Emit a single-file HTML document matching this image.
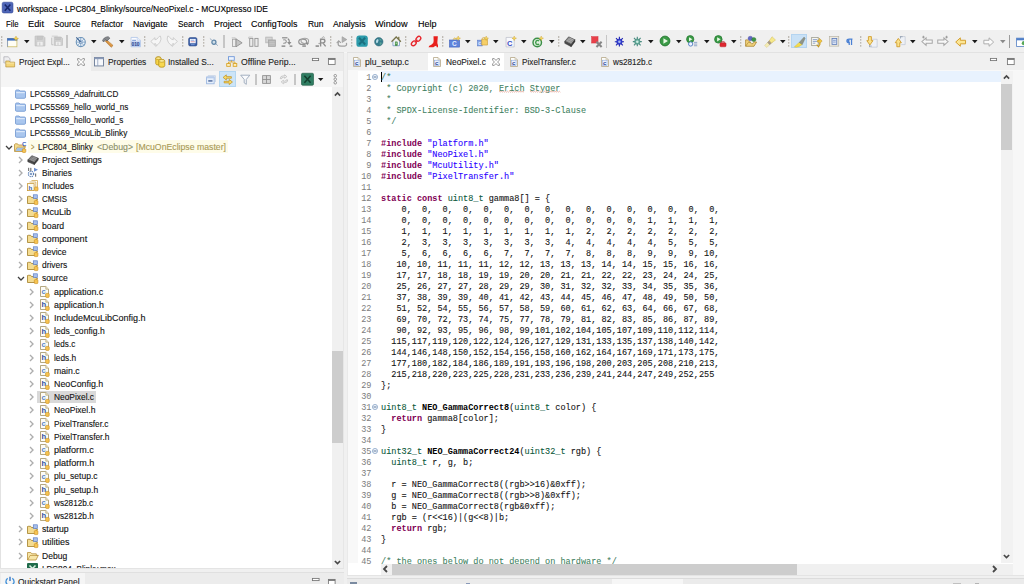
<!DOCTYPE html>
<html lang="en"><head><meta charset="utf-8"><title>workspace - LPC804_Blinky/source/NeoPixel.c - MCUXpresso IDE</title>
<style>

html,body{margin:0;padding:0;}
body{width:1024px;height:584px;overflow:hidden;background:#f0f0f0;font-family:"Liberation Sans",sans-serif;font-size:9.3px;}
#app{position:relative;width:1024px;height:584px;overflow:hidden;background:#f0f0f0;}
#app div,#app span.t,#app svg,#app pre{position:absolute;}
span.t{white-space:pre;transform-origin:0 50%;-webkit-text-stroke:0.12px;}
svg{overflow:visible;}
pre{margin:0;font-family:"Liberation Mono",monospace;font-size:9px;line-height:11px;transform-origin:0 0;white-space:pre;-webkit-text-stroke:0.1px;}
.k{color:#7f0055;font-weight:bold;-webkit-text-stroke:0;}
.c{color:#3f7f5f;-webkit-text-stroke:0.08px;}
.s{color:#2a00ff;}
.ty{color:#0e5a3c;}
.f{font-weight:bold;color:#000;-webkit-text-stroke:0;}


</style></head>
<body>
<div id="app">
<div style="left:0px;top:0px;width:1024px;height:30px;background:#ffffff;"></div>
<span class="t" style="left:17px;top:2.50px;line-height:12px;font-size:9.3px;color:#000;transform:scaleX(0.9114);">workspace - LPC804_Blinky/source/NeoPixel.c - MCUXpresso IDE</span>
<span class="t" style="left:6px;top:18.00px;line-height:12px;font-size:9.3px;color:#000;transform:scaleX(0.8342);">File</span>
<span class="t" style="left:28px;top:18.00px;line-height:12px;font-size:9.3px;color:#000;transform:scaleX(0.9981);">Edit</span>
<span class="t" style="left:53.5px;top:18.00px;line-height:12px;font-size:9.3px;color:#000;transform:scaleX(0.8993);">Source</span>
<span class="t" style="left:90.5px;top:18.00px;line-height:12px;font-size:9.3px;color:#000;transform:scaleX(0.9106);">Refactor</span>
<span class="t" style="left:133px;top:18.00px;line-height:12px;font-size:9.3px;color:#000;transform:scaleX(0.9400);">Navigate</span>
<span class="t" style="left:177.5px;top:18.00px;line-height:12px;font-size:9.3px;color:#000;transform:scaleX(0.8823);">Search</span>
<span class="t" style="left:213.5px;top:18.00px;line-height:12px;font-size:9.3px;color:#000;transform:scaleX(0.9503);">Project</span>
<span class="t" style="left:251px;top:18.00px;line-height:12px;font-size:9.3px;color:#000;transform:scaleX(0.9572);">ConfigTools</span>
<span class="t" style="left:307.5px;top:18.00px;line-height:12px;font-size:9.3px;color:#000;transform:scaleX(0.9084);">Run</span>
<span class="t" style="left:333px;top:18.00px;line-height:12px;font-size:9.3px;color:#000;transform:scaleX(0.9386);">Analysis</span>
<span class="t" style="left:375px;top:18.00px;line-height:12px;font-size:9.3px;color:#000;transform:scaleX(0.9825);">Window</span>
<span class="t" style="left:417.5px;top:18.00px;line-height:12px;font-size:9.3px;color:#000;transform:scaleX(0.9673);">Help</span>
<div style="left:0px;top:30px;width:1024px;height:22px;background:#f0f0f0;"></div>
<div style="left:0px;top:52px;width:1024px;height:1px;background:#f6f6f6;"></div>
<svg style="left:1.10px;top:36px" width="1.4" height="12" viewBox="0 0 14 120"><path d="M7 3 V120" stroke="#aaa59c" stroke-width="13" stroke-dasharray="13 17" fill="none"/></svg>
<svg style="left:144.30px;top:36px" width="1.4" height="12" viewBox="0 0 14 120"><path d="M7 3 V120" stroke="#aaa59c" stroke-width="13" stroke-dasharray="13 17" fill="none"/></svg>
<svg style="left:182.00px;top:36px" width="1.4" height="12" viewBox="0 0 14 120"><path d="M7 3 V120" stroke="#aaa59c" stroke-width="13" stroke-dasharray="13 17" fill="none"/></svg>
<svg style="left:202.70px;top:36px" width="1.4" height="12" viewBox="0 0 14 120"><path d="M7 3 V120" stroke="#aaa59c" stroke-width="13" stroke-dasharray="13 17" fill="none"/></svg>
<svg style="left:330.10px;top:36px" width="1.4" height="12" viewBox="0 0 14 120"><path d="M7 3 V120" stroke="#aaa59c" stroke-width="13" stroke-dasharray="13 17" fill="none"/></svg>
<svg style="left:350.70px;top:36px" width="1.4" height="12" viewBox="0 0 14 120"><path d="M7 3 V120" stroke="#aaa59c" stroke-width="13" stroke-dasharray="13 17" fill="none"/></svg>
<svg style="left:405.30px;top:36px" width="1.4" height="12" viewBox="0 0 14 120"><path d="M7 3 V120" stroke="#aaa59c" stroke-width="13" stroke-dasharray="13 17" fill="none"/></svg>
<svg style="left:442.10px;top:36px" width="1.4" height="12" viewBox="0 0 14 120"><path d="M7 3 V120" stroke="#aaa59c" stroke-width="13" stroke-dasharray="13 17" fill="none"/></svg>
<svg style="left:557.60px;top:36px" width="1.4" height="12" viewBox="0 0 14 120"><path d="M7 3 V120" stroke="#aaa59c" stroke-width="13" stroke-dasharray="13 17" fill="none"/></svg>
<svg style="left:739.90px;top:36px" width="1.4" height="12" viewBox="0 0 14 120"><path d="M7 3 V120" stroke="#aaa59c" stroke-width="13" stroke-dasharray="13 17" fill="none"/></svg>
<svg style="left:787.70px;top:36px" width="1.4" height="12" viewBox="0 0 14 120"><path d="M7 3 V120" stroke="#aaa59c" stroke-width="13" stroke-dasharray="13 17" fill="none"/></svg>
<svg style="left:859.80px;top:36px" width="1.4" height="12" viewBox="0 0 14 120"><path d="M7 3 V120" stroke="#aaa59c" stroke-width="13" stroke-dasharray="13 17" fill="none"/></svg>
<div style="left:66.3px;top:35.2px;width:1.6px;height:12.8px;background:#c6c6c6;"></div>
<div style="left:223.2px;top:35.2px;width:1.6px;height:12.8px;background:#c6c6c6;"></div>
<div style="left:605.9000000000001px;top:35.2px;width:1.6px;height:12.8px;background:#c6c6c6;"></div>
<div style="left:1009.2px;top:34.8px;width:1px;height:13.2px;background:#9c9c9c;"></div>
<svg style="left:23.7px;top:39.90px" width="5.6" height="3.2" viewBox="0 0 56 32"><path d="M0 0 L56 0 L28 32 Z" fill="#1a1a1a"/></svg>
<svg style="left:90.5px;top:39.90px" width="5.6" height="3.2" viewBox="0 0 56 32"><path d="M0 0 L56 0 L28 32 Z" fill="#1a1a1a"/></svg>
<svg style="left:118.6px;top:39.90px" width="5.6" height="3.2" viewBox="0 0 56 32"><path d="M0 0 L56 0 L28 32 Z" fill="#1a1a1a"/></svg>
<svg style="left:464.8px;top:39.90px" width="5.6" height="3.2" viewBox="0 0 56 32"><path d="M0 0 L56 0 L28 32 Z" fill="#1a1a1a"/></svg>
<svg style="left:492.5px;top:39.90px" width="5.6" height="3.2" viewBox="0 0 56 32"><path d="M0 0 L56 0 L28 32 Z" fill="#1a1a1a"/></svg>
<svg style="left:520.9px;top:39.90px" width="5.6" height="3.2" viewBox="0 0 56 32"><path d="M0 0 L56 0 L28 32 Z" fill="#1a1a1a"/></svg>
<svg style="left:548.7px;top:39.90px" width="5.6" height="3.2" viewBox="0 0 56 32"><path d="M0 0 L56 0 L28 32 Z" fill="#1a1a1a"/></svg>
<svg style="left:580.3px;top:39.90px" width="5.6" height="3.2" viewBox="0 0 56 32"><path d="M0 0 L56 0 L28 32 Z" fill="#1a1a1a"/></svg>
<svg style="left:647.6px;top:39.90px" width="5.6" height="3.2" viewBox="0 0 56 32"><path d="M0 0 L56 0 L28 32 Z" fill="#1a1a1a"/></svg>
<svg style="left:675.6px;top:39.90px" width="5.6" height="3.2" viewBox="0 0 56 32"><path d="M0 0 L56 0 L28 32 Z" fill="#1a1a1a"/></svg>
<svg style="left:703.7px;top:39.90px" width="5.6" height="3.2" viewBox="0 0 56 32"><path d="M0 0 L56 0 L28 32 Z" fill="#1a1a1a"/></svg>
<svg style="left:731px;top:39.90px" width="5.6" height="3.2" viewBox="0 0 56 32"><path d="M0 0 L56 0 L28 32 Z" fill="#1a1a1a"/></svg>
<svg style="left:779.6px;top:39.90px" width="5.6" height="3.2" viewBox="0 0 56 32"><path d="M0 0 L56 0 L28 32 Z" fill="#1a1a1a"/></svg>
<svg style="left:882.3px;top:39.90px" width="5.6" height="3.2" viewBox="0 0 56 32"><path d="M0 0 L56 0 L28 32 Z" fill="#1a1a1a"/></svg>
<svg style="left:910.3px;top:39.90px" width="5.6" height="3.2" viewBox="0 0 56 32"><path d="M0 0 L56 0 L28 32 Z" fill="#1a1a1a"/></svg>
<svg style="left:971.5px;top:39.90px" width="5.6" height="3.2" viewBox="0 0 56 32"><path d="M0 0 L56 0 L28 32 Z" fill="#1a1a1a"/></svg>
<svg style="left:999.5px;top:39.90px" width="5.6" height="3.2" viewBox="0 0 56 32"><path d="M0 0 L56 0 L28 32 Z" fill="#8a8a8a"/></svg>
<svg style="left:7px;top:35.55px" width="11.5" height="11.5" viewBox="0 0 16 16"><rect x="0.8" y="3.6" width="13" height="11.4" fill="#fffef4" stroke="#cdbb66" stroke-width="1.1"/><path d="M0.8 15 V3.6" stroke="#7f98c8" stroke-width="1.1"/><rect x="0.3" y="3" width="14" height="3.4" fill="#3f6fc0"/><path d="M12.5 0 L13.6 2.6 L16 3.4 L13.6 4.4 L12.5 7 L11.4 4.4 L9 3.4 L11.4 2.6 Z" fill="#f5d55a" stroke="#c89a20" stroke-width="0.5"/></svg>
<svg style="left:34.2px;top:35.30px" width="12" height="12" viewBox="0 0 16 16"><path d="M1.5 1.5 H12.5 L14.5 3.5 V14.5 H1.5 Z" fill="#d2d2d2" stroke="#bcbcbc" stroke-width="1"/><rect x="4" y="1.5" width="7.5" height="4.5" fill="#c6c6c6" stroke="#bcbcbc" stroke-width="0.6"/><rect x="4" y="8.5" width="8" height="6" fill="#eeeeee" stroke="#c4c4c4" stroke-width="0.6"/><rect x="6.5" y="10" width="2" height="4.5" fill="#d2d2d2"/></svg>
<svg style="left:51px;top:35.30px" width="12" height="12" viewBox="0 0 16 16"><path d="M1 3.5 V13 H3" fill="none" stroke="#bcbcbc" stroke-width="1.2"/><g transform="translate(3,1.5) scale(0.85)"><path d="M1.5 1.5 H12.5 L14.5 3.5 V14.5 H1.5 Z" fill="#d2d2d2" stroke="#bcbcbc" stroke-width="1"/><rect x="4" y="1.5" width="7.5" height="4.5" fill="#c6c6c6" stroke="#bcbcbc" stroke-width="0.6"/><rect x="4" y="8.5" width="8" height="6" fill="#eeeeee" stroke="#c4c4c4" stroke-width="0.6"/><rect x="6.5" y="10" width="2" height="4.5" fill="#d2d2d2"/></g><path d="M1 1.5 H9" stroke="#c4c4c4" stroke-width="1"/></svg>
<svg style="left:75.2px;top:35.55px" width="11.5" height="11.5" viewBox="0 0 16 16"><circle cx="8" cy="8.5" r="6.3" fill="#eef4fb" stroke="#6a92b8" stroke-width="1.5"/><path d="M8 2.5 V14.5 M2 8.5 H14 M3.8 4.3 L12.2 12.7 M12.2 4.3 L3.8 12.7" stroke="#7aa0c4" stroke-width="1.2"/><circle cx="8" cy="8.5" r="1.8" fill="#f4f8fd" stroke="#4a75a8" stroke-width="0.9"/><path d="M1.8 1.8 L8 8.5" stroke="#3f6494" stroke-width="1.6"/></svg>
<svg style="left:102px;top:35.55px" width="11.5" height="11.5" viewBox="0 0 16 16"><path d="M6.2 5 L15.4 13.2 L12.8 15.8 L4.6 7.4 Z" fill="#d68f3c" stroke="#a46a24" stroke-width="0.7"/><path d="M7.5 6.8 L13.8 13" stroke="#ecb870" stroke-width="0.9"/><path d="M0.8 7 Q1.8 1.6 8.6 0.9 L11 3 L7 7 L5.2 5.4 Q3.6 5.6 2.8 8 Z" fill="#85888c" stroke="#4c4f55" stroke-width="0.8"/></svg>
<svg style="left:130px;top:35.55px" width="11.5" height="11.5" viewBox="0 0 16 16"><path d="M1.5 2 H10 L14.5 6 V15 H1.5 Z" fill="#fbfcff" stroke="#a9c0e6" stroke-width="1"/><path d="M10 2 V6 H14.5" fill="#eef3fc" stroke="#a9c0e6" stroke-width="0.8"/><rect x="1.5" y="7.4" width="13" height="7.6" fill="#b4c8ee"/><path d="M3 6 H8.5" stroke="#5f86cc" stroke-width="1.2"/><text x="2" y="14" font-family="Liberation Sans, sans-serif" font-size="6.8" font-weight="bold" fill="#2a468a">010</text></svg>
<svg style="left:150px;top:35.20px" width="12.2" height="12.2" viewBox="0 0 16 16"><path d="M1 8.5 L6.5 3.5 V6.3 Q9.5 6 11 3.2 Q12 1.2 13.8 1.5 Q15.5 5.5 13 9.5 Q11 12.5 7.5 15 Q9 12.2 6.5 10.8 V13.5 Z" fill="#f6f6f6" stroke="#c4c4c4" stroke-width="1"/></svg>
<svg style="left:165.6px;top:35.20px" width="12.2" height="12.2" viewBox="0 0 16 16"><path d="M15 8.5 L9.5 3.5 V6.3 Q6.5 6 5 3.2 Q4 1.2 2.2 1.5 Q0.5 5.5 3 9.5 Q5 12.5 8.5 15 Q7 12.2 9.5 10.8 V13.5 Z" fill="#f6f6f6" stroke="#c4c4c4" stroke-width="1"/></svg>
<svg style="left:188.4px;top:36.50px" width="9.6" height="9.6" viewBox="0 0 16 16"><rect x="1" y="1" width="14" height="14" rx="2.6" fill="#3b5fa8" stroke="#2a4684" stroke-width="0.9"/><rect x="3.2" y="3.2" width="9.6" height="7.2" fill="#f4f8ff"/><path d="M4.5 5.4 H10.5" stroke="#5f86d0" stroke-width="1.1"/><path d="M4.5 7.9 H11.5" stroke="#c86a78" stroke-width="1"/><path d="M5 12.8 H11" stroke="#7fa4e0" stroke-width="1.4"/></svg>
<svg style="left:209.2px;top:36.50px" width="9.6" height="9.6" viewBox="0 0 16 16"><path d="M1.5 2.5 L14.8 14.5" stroke="#8aa0b8" stroke-width="1.4"/><circle cx="8.2" cy="8.8" r="3.4" fill="#cfdde8" stroke="#5f86a8" stroke-width="2.1"/></svg>
<svg style="left:230.6px;top:35.55px" width="11.5" height="11.5" viewBox="0 0 16 16"><path d="M1 2.5 H6 V4.5" fill="none" stroke="#b8b8b8" stroke-width="1"/><rect x="2" y="4.5" width="5" height="10" fill="#ececec" stroke="#a4a4a4" stroke-width="1.2"/><path d="M7 4 L15.5 9.5 L7 15 Z" fill="#c4c4c4" stroke="#8e8e8e" stroke-width="1.2"/></svg>
<svg style="left:248px;top:35.80px" width="11" height="11" viewBox="0 0 16 16"><path d="M1 4 V1.5 H7" fill="none" stroke="#b8b8b8" stroke-width="1"/><rect x="2.5" y="3.5" width="4.6" height="11.5" fill="#ececec" stroke="#959595" stroke-width="1.3"/><rect x="10" y="3.5" width="4.6" height="11.5" fill="#ececec" stroke="#959595" stroke-width="1.3"/></svg>
<svg style="left:265px;top:35.55px" width="11.5" height="11.5" viewBox="0 0 16 16"><rect x="1" y="1.5" width="9" height="8" fill="#cfcfcf" stroke="#b4b4b4" stroke-width="1"/><path d="M2 4 H9 M2 6.5 H9" stroke="#e0e0e0" stroke-width="0.9"/><rect x="5" y="5.5" width="9.5" height="9" fill="#b4b4b4" stroke="#a2a2a2" stroke-width="1"/><path d="M6 8 H13.5 M6 10.3 H13.5 M6 12.6 H13.5" stroke="#d0d0d0" stroke-width="0.9"/></svg>
<svg style="left:280.7px;top:35.55px" width="11.5" height="11.5" viewBox="0 0 16 16"><path d="M1.5 2.5 H9" stroke="#8c8c8c" stroke-width="1.7"/><path d="M3 5.5 Q7 4.5 7.5 8 Q6.5 10.5 3 10" fill="none" stroke="#9a9a9a" stroke-width="1.5"/><path d="M9.5 4 Q12 5 11.5 9" fill="none" stroke="#8c8c8c" stroke-width="1.5"/><path d="M8.5 8.5 H14.5 L11.5 12.5 Z" fill="#8c8c8c"/><path d="M0.8 14 H6 M12 14 H15.8" stroke="#7c7c7c" stroke-width="1.8"/></svg>
<svg style="left:298px;top:35.55px" width="11.5" height="11.5" viewBox="0 0 16 16"><ellipse cx="6.5" cy="8" rx="5.5" ry="3.8" fill="none" stroke="#959595" stroke-width="1.7"/><ellipse cx="9.5" cy="6.8" rx="5.3" ry="3.6" fill="none" stroke="#a4a4a4" stroke-width="1.5"/><path d="M10.5 9.5 H15.5 L13 12.8 Z" fill="#8c8c8c"/><path d="M6 14 H11" stroke="#7c7c7c" stroke-width="1.8"/></svg>
<svg style="left:315px;top:35.55px" width="11.5" height="11.5" viewBox="0 0 16 16"><path d="M0.8 14 H5.5" stroke="#7c7c7c" stroke-width="1.9"/><path d="M7.8 14.5 V4.5 H11 Q13.8 4.5 13.8 7 Q13.8 9.5 11 9.5 H7.8 M11 9.5 L14.8 14.5" fill="none" stroke="#8e8e8e" stroke-width="1.9"/><path d="M9 3 L12 0.8 L13.5 3.5" fill="none" stroke="#a8a8a8" stroke-width="1.2"/><circle cx="5.8" cy="10.5" r="1" fill="#9a9a9a"/></svg>
<svg style="left:336px;top:35.55px" width="11.5" height="11.5" viewBox="0 0 16 16"><path d="M8.5 1 L15 5 L8.5 9 Z" fill="#b0b0b0" stroke="#9c9c9c" stroke-width="0.9"/><path d="M3.5 8.5 Q1.5 14 7 14 H12 Q15.5 14 14.5 9.5" fill="none" stroke="#a0a0a0" stroke-width="1.8"/><path d="M1 10 L3.8 6.8 L6.8 9.6" fill="none" stroke="#a0a0a0" stroke-width="1.5"/></svg>
<svg style="left:355.8px;top:35.20px" width="12.2" height="12.2" viewBox="0 0 16 16"><rect x="0.5" y="0.5" width="15" height="15" rx="3.8" fill="#2c9bab"/><path d="M4 3.6 L12 12.4 M12 3.6 L4 12.4" stroke="#1a7080" stroke-width="2.7"/></svg>
<svg style="left:373.7px;top:36.50px" width="9.6" height="9.6" viewBox="0 0 16 16"><circle cx="8" cy="8" r="7" fill="#357c8e" stroke="#2a6474" stroke-width="0.9"/><path d="M3.2 8.5 Q3 4.5 6.5 3.5 Q8.5 5 7 7.5 Q6.5 10 4.5 10.5 Z" fill="#b8dce8"/><path d="M9.5 9 Q12.5 8 13 10.5 Q12 13.5 9.5 13 Z" fill="#5aa296"/><path d="M9 2.5 Q12 3 13 5.5 Q11 6.5 9.5 5 Z" fill="#5aa296"/></svg>
<svg style="left:390.6px;top:36.10px" width="10.4" height="10.4" viewBox="0 0 16 16"><rect x="10.8" y="1.2" width="2.2" height="4" fill="#8a8458"/><path d="M3 8 V15 H13 V8" fill="#fbfdff" stroke="#6f90c0" stroke-width="1.2"/><rect x="6.3" y="9" width="3.6" height="6" fill="#4f9a50" stroke="#357a38" stroke-width="0.6"/><rect x="7.3" y="10.3" width="1.5" height="1.5" fill="#e8f4e0"/><path d="M0.8 8.8 L8 1.6 L15.2 8.8" fill="none" stroke="#77744c" stroke-width="2"/></svg>
<svg style="left:410px;top:35.20px" width="12.2" height="12.2" viewBox="0 0 16 16"><ellipse cx="5" cy="11" rx="3.6" ry="2.6" transform="rotate(-45 5 11)" fill="none" stroke="#e6262c" stroke-width="1.75"/><ellipse cx="11" cy="5" rx="3.6" ry="2.6" transform="rotate(-45 11 5)" fill="none" stroke="#e6262c" stroke-width="1.75"/><path d="M6.3 9.7 L9.7 6.3" stroke="#e6262c" stroke-width="1.75"/></svg>
<svg style="left:427.5px;top:35.50px" width="11.6" height="11.6" viewBox="0 0 16 16"><path d="M7.6 0.5 H13.6 L12.9 9 Q13 11.4 13.8 12.4 V15.4 H12 L11.5 13.4 Q9.4 14 7.4 15.4 H0.8 Q1 13.2 4.6 12 Q8 10.8 7.8 7 Z" fill="#e8201c"/></svg>
<svg style="left:449px;top:35.55px" width="11.5" height="11.5" viewBox="0 0 16 16"><path d="M5 5.2 L8 2.5 L11 5.2" fill="#f4d878" stroke="#c8a030" stroke-width="0.7"/><rect x="0.8" y="5.6" width="13.8" height="9.8" fill="#5f84dc" stroke="#3f62bc" stroke-width="0.9"/><text x="4" y="14" font-family="Liberation Sans, sans-serif" font-size="9" font-weight="bold" fill="#e4ecff">C</text><path d="M12.8 0 L13.7 2.3 L16 3.1 L13.7 4 L12.8 6.4 L11.9 4 L9.6 3.1 L11.9 2.3 Z" fill="#f7d860" stroke="#c89a20" stroke-width="0.5"/></svg>
<svg style="left:477px;top:35.55px" width="11.5" height="11.5" viewBox="0 0 16 16"><rect x="0.8" y="5.8" width="6.4" height="8" fill="#86a6e8" stroke="#5878c8" stroke-width="0.8"/><text x="1.9" y="12.4" font-family="Liberation Sans, sans-serif" font-size="6.4" font-weight="bold" fill="#eef2ff">c</text><path d="M7 4.4 Q7 2 9.5 2 Q12 2 12 4.4" fill="none" stroke="#d8a83a" stroke-width="0.9"/><path d="M6.6 4.4 H14.6 V12.6 H6.6 Z" fill="#f6cf68" stroke="#c89a30" stroke-width="0.8"/><path d="M12.8 0 L13.7 2.3 L16 3.1 L13.7 4 L12.8 6.4 L11.9 4 L9.6 3.1 L11.9 2.3 Z" fill="#f7d860" stroke="#c89a20" stroke-width="0.5"/></svg>
<svg style="left:505.2px;top:35.55px" width="11.5" height="11.5" viewBox="0 0 16 16"><path d="M1.5 2 H9.5 L12.8 5 V15.2 H1.5 Z" fill="#f8f9fc" stroke="#b4b8c4" stroke-width="0.9"/><text x="2.8" y="13.3" font-family="Liberation Sans, sans-serif" font-size="10.5" font-weight="bold" fill="#3a52c4">C</text><path d="M12.8 0 L13.7 2.3 L16 3.1 L13.7 4 L12.8 6.4 L11.9 4 L9.6 3.1 L11.9 2.3 Z" fill="#f7d860" stroke="#c89a20" stroke-width="0.5"/></svg>
<svg style="left:532px;top:35.55px" width="11.5" height="11.5" viewBox="0 0 16 16"><circle cx="7.3" cy="9" r="5.9" fill="#dff0de" stroke="#3b8f48" stroke-width="2"/><path d="M9.9 7 Q7.8 5.2 5.8 6.9 Q4.4 9 5.8 11.1 Q7.8 12.8 9.9 11" fill="none" stroke="#3d9a4a" stroke-width="1.9"/><path d="M12.8 0 L13.7 2.3 L16 3.1 L13.7 4 L12.8 6.4 L11.9 4 L9.6 3.1 L11.9 2.3 Z" fill="#f7d860" stroke="#c89a20" stroke-width="0.5"/></svg>
<svg style="left:564.3px;top:35.55px" width="11.5" height="11.5" viewBox="0 0 16 16"><path d="M1 7.5 L6.5 1.2 L15.2 5.2 L10 12 Z" fill="#8c8c8c" stroke="#303030" stroke-width="0.8"/><path d="M4.2 6.2 L10.4 9 M5.8 4.4 L12 7.2 M7.4 2.8 L13.4 5.6" stroke="#c4c4c4" stroke-width="0.8"/><path d="M1 7.5 L10 12 V14.8 L1 10.2 Z" fill="#4a4a4a" stroke="#2a2a2a" stroke-width="0.6"/><path d="M10 12 L15.2 5.2 V8 L10 14.8 Z" fill="#383838" stroke="#2a2a2a" stroke-width="0.6"/></svg>
<svg style="left:590.8px;top:35.55px" width="11.5" height="11.5" viewBox="0 0 16 16"><rect x="0.8" y="0.8" width="9" height="9" fill="#e8404a" stroke="#d42a36" stroke-width="0.6"/><path d="M7.6 8 L14.8 15.2 M14.8 8 L7.6 15.2" stroke="#858585" stroke-width="2.9"/></svg>
<svg style="left:614.2px;top:35.90px" width="10.8" height="10.8" viewBox="0 0 16 16"><path d="M8 1 V15.5 M1.2 8.5 H14.8 M3 3 L13 14 M13 3 L3 14" stroke="#2228b4" stroke-width="1.7" fill="none"/><circle cx="8" cy="8.5" r="4.1" fill="#3340d0" stroke="#2228b4" stroke-width="0.9"/><circle cx="8" cy="8.6" r="1.9" fill="#a8b8f4"/></svg>
<svg style="left:631.6px;top:36.00px" width="10.6" height="10.6" viewBox="0 0 16 16"><path d="M8 1 V15.5 M1.2 8.5 H14.8 M3 3 L13 14 M13 3 L3 14" stroke="#4a8c80" stroke-width="1.7" fill="none"/><circle cx="8" cy="8.5" r="4.1" fill="#62a898" stroke="#4a8c80" stroke-width="0.9"/><circle cx="8" cy="8.6" r="1.9" fill="#cdeee4"/></svg>
<svg style="left:658.8px;top:35.30px" width="12" height="12" viewBox="0 0 16 16"><g transform="translate(0.5,0.5)"><circle cx="7.5" cy="7.5" r="6.5" fill="#3a9a46" stroke="#267a32" stroke-width="1.3"/><path d="M5.4 3.9 L11.4 7.5 L5.4 11.1 Z" fill="#e8f8e4"/></g></svg>
<svg style="left:686px;top:35.40px" width="11.8" height="11.8" viewBox="0 0 16 16"><g transform="scale(0.76)"><circle cx="7.5" cy="7.5" r="6.5" fill="#3a9a46" stroke="#267a32" stroke-width="1.3"/><path d="M5.4 3.9 L11.4 7.5 L5.4 11.1 Z" fill="#e8f8e4"/></g><circle cx="6.3" cy="12.2" r="2.9" fill="#eef4ff" stroke="#4a78c0" stroke-width="1.2"/><path d="M10.8 10 H15.2 M10.8 12.3 H15.2 M10.8 14.6 H15.2" stroke="#7a94c0" stroke-width="1.1"/></svg>
<svg style="left:714.3px;top:35.20px" width="12.2" height="12.2" viewBox="0 0 16 16"><g transform="scale(0.76)"><circle cx="7.5" cy="7.5" r="6.5" fill="#3a9a46" stroke="#267a32" stroke-width="1.3"/><path d="M5.4 3.9 L11.4 7.5 L5.4 11.1 Z" fill="#e8f8e4"/></g><rect x="7.8" y="10.2" width="8" height="5.3" rx="1.3" fill="#e02830" stroke="#b01c24" stroke-width="0.6"/><path d="M10 10.2 V8.8 H13.5 V10.2" fill="none" stroke="#b01c24" stroke-width="0.9"/></svg>
<svg style="left:745px;top:35.20px" width="12.2" height="12.2" viewBox="0 0 16 16"><circle cx="7" cy="4.6" r="3" fill="#6268c4" stroke="#444a9c" stroke-width="0.5"/><circle cx="11.6" cy="6" r="2.8" fill="#3f9446" stroke="#2a7430" stroke-width="0.5"/><path d="M0.8 6.4 V14.8 H11.8 L15.2 9.2 H12.4 L9 12 L4 7 L3.4 6.4 Z" fill="#f1d27c" stroke="#a8822c" stroke-width="1"/><path d="M1 14.6 L4.4 9.6 H8" fill="none" stroke="#a8822c" stroke-width="0.8"/></svg>
<svg style="left:763.5px;top:35.55px" width="11.5" height="11.5" viewBox="0 0 16 16"><path d="M0.8 13.2 L8 6 L11 9 L4 16 Z" fill="#f4ecb4" stroke="#d4c680" stroke-width="0.6"/><path d="M5 9 L8 6 L11 9 L8 12 Z" fill="#a89a8c" stroke="#8a7c6c" stroke-width="0.5"/><path d="M7.4 6.6 L11.2 1 L16 5.6 L10.4 9.6 Z" fill="#f6e98c" stroke="#d0bc58" stroke-width="0.7"/></svg>
<div style="left:791.2px;top:33.8px;width:16.3px;height:14.6px;background:#c9e1f6;border:0.5px solid #b4d4f0;box-sizing:border-box;"></div>
<svg style="left:794px;top:35.60px" width="11.4" height="11.4" viewBox="0 0 16 16"><path d="M0.5 15.5 Q3 12.5 7.4 9 L11.6 12 Q7 15.4 3.5 15.8 Z" fill="#f4dc4c" stroke="#d4b42c" stroke-width="0.6"/><path d="M7.4 9 L14.2 1.5 L15.6 3.4 L11.6 12 Z" fill="#8f9488" stroke="#6f7468" stroke-width="0.6"/></svg>
<svg style="left:811px;top:35.55px" width="11.5" height="11.5" viewBox="0 0 16 16"><rect x="1" y="2" width="9" height="11.5" fill="#f8f8f2" stroke="#8a8a7a" stroke-width="0.9"/><path d="M2.5 5 H8.5 M2.5 7.5 H8.5 M2.5 10 H6" stroke="#5878b8" stroke-width="0.9"/><path d="M9 6 H11.5 V3 L15.5 7 L11.5 11.2 V8.5 H9 Z" fill="#f4c840" stroke="#b88a18" stroke-width="0.7"/><path d="M8 12 L10.5 15 L13 10.5" fill="none" stroke="#c89818" stroke-width="1.4"/></svg>
<svg style="left:828.5px;top:35.90px" width="10.8" height="10.8" viewBox="0 0 16 16"><rect x="1" y="1" width="13.5" height="14" fill="#ece9e0" stroke="#b0ac9c" stroke-width="0.9"/><rect x="4.5" y="3.8" width="7" height="8.6" fill="#dfe8f8" stroke="#5a7ab8" stroke-width="1.2"/><path d="M6 6.5 H10 M6 9 H10" stroke="#5a7ab8" stroke-width="0.9"/></svg>
<svg style="left:846.4px;top:37.60px" width="7.4" height="7.4" viewBox="0 0 16 16"><path d="M14 2.6 H7 Q2 2.6 2 6.4 Q2 10 7 10 V15.4 M12 2.6 V15.4" fill="none" stroke="#4a80d4" stroke-width="2.7"/><path d="M7.5 2.6 Q2.4 2.6 2.4 6.3 Q2.4 9.6 7.5 9.8 Z" fill="#4a80d4"/></svg>
<svg style="left:866px;top:35.55px" width="11.5" height="11.5" viewBox="0 0 16 16"><path d="M8 4.5 H15.5 V15.5 H6" fill="#eef1f6" stroke="#b4bccc" stroke-width="0.8"/><path d="M5 14 H8 M5 12 V15.6" stroke="#6f7f98" stroke-width="0.8"/><g transform="translate(-0.6,0) scale(0.86)"><path d="M4.6 1 H9.4 V7.5 H12 L7 14.5 L2 7.5 H4.6 Z" fill="#fbe28a" stroke="#d09a28" stroke-width="1.4"/></g></svg>
<svg style="left:893.8px;top:35.55px" width="11.5" height="11.5" viewBox="0 0 16 16"><path d="M8 0.8 H15.5 V12 H10" fill="#eef1f6" stroke="#b4bccc" stroke-width="0.8"/><path d="M9 1 H12 M9 0.5 V3.5" stroke="#6f7f98" stroke-width="0.8"/><g transform="translate(0,15.8) scale(0.86,-0.86)"><path d="M4.6 1 H9.4 V7.5 H12 L7 14.5 L2 7.5 H4.6 Z" fill="#fbe28a" stroke="#d09a28" stroke-width="1.4"/></g></svg>
<svg style="left:921.2px;top:35.30px" width="12" height="12" viewBox="0 0 16 16"><path d="M1.2 8.8 L6.8 3.8 V6.6 H15 V11 H6.8 V13.8 Z" fill="#f8f8f8" stroke="#a6a6a6" stroke-width="1.35"/><path d="M1.5 2.8 H5 M3.2 1 V4.6" stroke="#8a8a8a" stroke-width="1"/></svg>
<svg style="left:937px;top:35.30px" width="12" height="12" viewBox="0 0 16 16"><path d="M14.8 8.8 L9.2 3.8 V6.6 H1 V11 H9.2 V13.8 Z" fill="#f8f8f8" stroke="#a6a6a6" stroke-width="1.35"/><path d="M11 2.8 H14.5 M12.8 1 V4.6" stroke="#8a8a8a" stroke-width="1"/></svg>
<svg style="left:955.2px;top:35.60px" width="11.4" height="11.4" viewBox="0 0 16 16"><path d="M1 8.5 L7.5 2.6 V6 H14.8 V11 H7.5 V14.4 Z" fill="#fce694" stroke="#d4a030" stroke-width="1.4"/></svg>
<svg style="left:983.2px;top:35.60px" width="11.4" height="11.4" viewBox="0 0 16 16"><path d="M15 8.5 L8.5 2.6 V6 H1.2 V11 H8.5 V14.4 Z" fill="#fbfbfb" stroke="#a8a8a8" stroke-width="1.3"/></svg>
<svg style="left:1016px;top:35.55px" width="11.5" height="11.5" viewBox="0 0 16 16"><rect x="0.8" y="3" width="14" height="11.5" fill="#fff" stroke="#5f88c8" stroke-width="1.2"/><rect x="0.8" y="3" width="14" height="3" fill="#4f7fc8"/><circle cx="11" cy="10" r="3" fill="#58a858"/></svg>
<svg style="left:2px;top:2px" width="11.2" height="11.2" viewBox="0 0 16 16"><rect x="0.3" y="0.3" width="15.4" height="15.4" rx="2.2" fill="#4f66b8" stroke="#2f4494" stroke-width="0.8"/><path d="M4 3.5 L12 12.5 M12 3.5 L4 12.5" stroke="#18286a" stroke-width="2.3"/></svg>
<div style="left:0px;top:52.5px;width:344px;height:18.5px;background:#ebebeb;"></div>
<div style="left:0px;top:52.4px;width:344px;height:0.8px;background:#e0e0e0;"></div>
<div style="left:1px;top:53px;width:90px;height:18px;background:#f5f5f5;"></div>
<div style="left:0px;top:53px;width:1px;height:516px;background:#e2e2e2;"></div>
<div style="left:343px;top:53px;width:1px;height:516px;background:#e6e6e6;"></div>
<div style="left:1px;top:71px;width:342px;height:16px;background:#f5f5f5;"></div>
<div style="left:1px;top:87px;width:331px;height:481.4px;background:#ffffff;"></div>
<div style="left:332px;top:87px;width:11px;height:481.4px;background:#f0f0f0;"></div>
<div style="left:332px;top:350.5px;width:10.5px;height:92.5px;background:#cdcdcd;"></div>
<span class="t" style="left:18.75px;top:55.50px;line-height:12px;font-size:9.3px;color:#222;transform:scaleX(0.8848);">Project Expl...</span>
<span class="t" style="left:107.5px;top:55.50px;line-height:12px;font-size:9.3px;color:#222;transform:scaleX(0.9027);">Properties</span>
<span class="t" style="left:168px;top:55.50px;line-height:12px;font-size:9.3px;color:#222;transform:scaleX(0.8940);">Installed S...</span>
<span class="t" style="left:240.5px;top:55.50px;line-height:12px;font-size:9.3px;color:#222;transform:scaleX(0.9319);">Offline Perip...</span>
<svg style="left:14.5px;top:88.5px" width="11" height="10" viewBox="0 0 11 10"><path d="M0.5 2.2 Q0.5 1 1.6 1 L4 1 L5 2 L9.4 2 Q10.5 2 10.5 3 L10.5 8.2 Q10.5 9.3 9.4 9.3 L1.6 9.3 Q0.5 9.3 0.5 8.2 Z" fill="#a9c6ee" stroke="#6f95cf" stroke-width="0.8"/><rect x="1.2" y="3" width="8.6" height="1.2" fill="#dbe8fa"/></svg>
<span class="t" style="left:30.1px;top:87.50px;line-height:12px;font-size:9.3px;color:#111;transform:scaleX(0.8771);">LPC55S69_AdafruitLCD</span>
<svg style="left:14.5px;top:101.7px" width="11" height="10" viewBox="0 0 11 10"><path d="M0.5 2.2 Q0.5 1 1.6 1 L4 1 L5 2 L9.4 2 Q10.5 2 10.5 3 L10.5 8.2 Q10.5 9.3 9.4 9.3 L1.6 9.3 Q0.5 9.3 0.5 8.2 Z" fill="#a9c6ee" stroke="#6f95cf" stroke-width="0.8"/><rect x="1.2" y="3" width="8.6" height="1.2" fill="#dbe8fa"/></svg>
<span class="t" style="left:30.1px;top:100.70px;line-height:12px;font-size:9.3px;color:#111;transform:scaleX(0.8763);">LPC55S69_hello_world_ns</span>
<svg style="left:14.5px;top:114.9px" width="11" height="10" viewBox="0 0 11 10"><path d="M0.5 2.2 Q0.5 1 1.6 1 L4 1 L5 2 L9.4 2 Q10.5 2 10.5 3 L10.5 8.2 Q10.5 9.3 9.4 9.3 L1.6 9.3 Q0.5 9.3 0.5 8.2 Z" fill="#a9c6ee" stroke="#6f95cf" stroke-width="0.8"/><rect x="1.2" y="3" width="8.6" height="1.2" fill="#dbe8fa"/></svg>
<span class="t" style="left:30.1px;top:113.90px;line-height:12px;font-size:9.3px;color:#111;transform:scaleX(0.8710);">LPC55S69_hello_world_s</span>
<svg style="left:14.5px;top:128.1px" width="11" height="10" viewBox="0 0 11 10"><path d="M0.5 2.2 Q0.5 1 1.6 1 L4 1 L5 2 L9.4 2 Q10.5 2 10.5 3 L10.5 8.2 Q10.5 9.3 9.4 9.3 L1.6 9.3 Q0.5 9.3 0.5 8.2 Z" fill="#a9c6ee" stroke="#6f95cf" stroke-width="0.8"/><rect x="1.2" y="3" width="8.6" height="1.2" fill="#dbe8fa"/></svg>
<span class="t" style="left:30.1px;top:127.10px;line-height:12px;font-size:9.3px;color:#111;transform:scaleX(0.8838);">LPC55S69_McuLib_Blinky</span>
<div style="left:28px;top:140.3px;width:200px;height:13px;background:#fefce9;"></div>
<svg style="left:5px;top:144.8px" width="8" height="5" viewBox="0 0 8 5"><path d="M1 1 L4 4 L7 1" fill="none" stroke="#404040" stroke-width="1.3"/></svg>
<svg style="left:14.4px;top:140.8px" width="13" height="12" viewBox="0 0 13 12"><path d="M0.5 3.5 L0.5 10.5 L9 10.5 L11.5 5.5 L9.5 5.5 L9.5 4 L4.5 4 L3.5 2.8 L1.2 2.8 Z" fill="#f3dc92" stroke="#b9913c" stroke-width="0.8"/><path d="M1.2 10 L3.2 6.2 L11.3 6.2" fill="none" stroke="#b9913c" stroke-width="0.6"/><path d="M1.6 10 L3.4 6.8 L10.6 6.8 L8.8 10 Z" fill="#9fc0ea"/><text x="8" y="5.4" font-family="Liberation Sans, sans-serif" font-size="6" font-weight="bold" fill="#3a62c0">C</text><rect x="8.3" y="7.8" width="3.5" height="3.7" rx="0.9" fill="#f6c452" stroke="#c88c1c" stroke-width="0.6"/></svg>
<span class="t" style="left:30.8px;top:140.80px;line-height:12px;font-size:9.3px;color:#a08a3a;transform:scaleX(0.6253);">&gt;</span>
<span class="t" style="left:38.4px;top:140.80px;line-height:12px;font-size:9.3px;color:#111;transform:scaleX(0.8619);">LPC804_Blinky</span>
<span class="t" style="left:96.9px;top:140.80px;line-height:12px;font-size:9.3px;color:#8a8f6a;transform:scaleX(0.9408);">&lt;Debug&gt;</span>
<span class="t" style="left:136px;top:140.80px;line-height:12px;font-size:9.3px;color:#a99a55;transform:scaleX(0.9364);">[McuOnEclipse master]</span>
<svg style="left:17.8px;top:155.5px" width="5" height="8" viewBox="0 0 5 8"><path d="M1 1 L4 4 L1 7" fill="none" stroke="#adadad" stroke-width="1.35"/></svg>
<svg style="left:26.7px;top:154.5px" width="12" height="10" viewBox="0 0 12 10"><path d="M0.8 5 L4.8 0.7 L11.2 3.2 L7.4 7.8 Z" fill="#7c7c7c" stroke="#2e2e2e" stroke-width="0.6"/><path d="M3.2 4.2 L7.6 6 M4.4 3 L8.8 4.8 M5.6 1.8 L10 3.6" stroke="#b0b0b0" stroke-width="0.5"/><path d="M0.8 5 L7.4 7.8 V9.6 L0.8 6.8 Z" fill="#4a4a4a" stroke="#2e2e2e" stroke-width="0.5"/><path d="M7.4 7.8 L11.2 3.2 V5 L7.4 9.6 Z" fill="#3a3a3a" stroke="#2e2e2e" stroke-width="0.5"/></svg>
<span class="t" style="left:41.8px;top:153.50px;line-height:12px;font-size:9.3px;color:#111;transform:scaleX(0.9198);">Project Settings</span>
<svg style="left:17.8px;top:168.7px" width="5" height="8" viewBox="0 0 5 8"><path d="M1 1 L4 4 L1 7" fill="none" stroke="#adadad" stroke-width="1.35"/></svg>
<svg style="left:26.7px;top:167.2px" width="12" height="11" viewBox="0 0 12 11"><circle cx="4" cy="7" r="2.6" fill="none" stroke="#5a7fb5" stroke-width="1.3" stroke-dasharray="1.2 0.9"/><circle cx="4" cy="7" r="1" fill="#5a7fb5"/><path d="M7 0.8 L11 2.8 L7 4.8 Z" fill="#6b8fd0"/><rect x="1" y="0.8" width="1.2" height="3.2" fill="#7a7a7a"/><rect x="3.2" y="0.8" width="1.2" height="3.2" fill="#7a7a7a"/><rect x="8" y="6.5" width="1.2" height="3.2" fill="#7a7a7a"/></svg>
<span class="t" style="left:41.8px;top:166.70px;line-height:12px;font-size:9.3px;color:#111;transform:scaleX(0.8871);">Binaries</span>
<svg style="left:17.8px;top:181.89999999999998px" width="5" height="8" viewBox="0 0 5 8"><path d="M1 1 L4 4 L1 7" fill="none" stroke="#adadad" stroke-width="1.35"/></svg>
<svg style="left:26.7px;top:180.39999999999998px" width="12" height="11" viewBox="0 0 12 11"><path d="M4.5 0.5 L10.5 0.5 L10.5 7.5" fill="none" stroke="#d2aa50" stroke-width="0.8"/><path d="M2.5 2 L8.8 2 L8.8 9" fill="none" stroke="#d2aa50" stroke-width="0.8"/><rect x="0.5" y="3.6" width="6.6" height="7" fill="#fdfbf0" stroke="#c89a3a" stroke-width="0.8"/><text x="1.6" y="9.6" font-family="Liberation Sans, sans-serif" font-size="6" font-weight="bold" fill="#3a5fb0">h</text><rect x="7.6" y="7" width="3.4" height="3.8" rx="0.9" fill="#f6c452" stroke="#c88c1c" stroke-width="0.6"/></svg>
<span class="t" style="left:41.8px;top:179.90px;line-height:12px;font-size:9.3px;color:#111;transform:scaleX(0.9180);">Includes</span>
<svg style="left:17.8px;top:195.1px" width="5" height="8" viewBox="0 0 5 8"><path d="M1 1 L4 4 L1 7" fill="none" stroke="#adadad" stroke-width="1.35"/></svg>
<svg style="left:26.7px;top:193.6px" width="12" height="11" viewBox="0 0 12 11"><path d="M0.5 2.5 L0.5 9.5 L8.5 9.5 L10.5 5 L8.8 5 L8.8 3.5 L4.5 3.5 L3.6 2.3 L1.2 2.3 Z" fill="#f4dc92" stroke="#a88430" stroke-width="0.85"/><rect x="6.3" y="0.8" width="4" height="3.6" fill="#a8c0ec" stroke="#5d7fc8" stroke-width="0.7"/><rect x="7.3" y="6.6" width="3.6" height="4" rx="0.9" fill="#f6c452" stroke="#c88c1c" stroke-width="0.6"/></svg>
<span class="t" style="left:41.8px;top:193.10px;line-height:12px;font-size:9.3px;color:#111;transform:scaleX(0.8488);">CMSIS</span>
<svg style="left:17.8px;top:208.3px" width="5" height="8" viewBox="0 0 5 8"><path d="M1 1 L4 4 L1 7" fill="none" stroke="#adadad" stroke-width="1.35"/></svg>
<svg style="left:26.7px;top:206.8px" width="12" height="11" viewBox="0 0 12 11"><path d="M0.5 2.5 L0.5 9.5 L8.5 9.5 L10.5 5 L8.8 5 L8.8 3.5 L4.5 3.5 L3.6 2.3 L1.2 2.3 Z" fill="#f4dc92" stroke="#a88430" stroke-width="0.85"/><rect x="6.3" y="0.8" width="4" height="3.6" fill="#a8c0ec" stroke="#5d7fc8" stroke-width="0.7"/><rect x="7.3" y="6.6" width="3.6" height="4" rx="0.9" fill="#f6c452" stroke="#c88c1c" stroke-width="0.6"/></svg>
<span class="t" style="left:41.8px;top:206.30px;line-height:12px;font-size:9.3px;color:#111;transform:scaleX(0.9705);">McuLib</span>
<svg style="left:17.8px;top:221.5px" width="5" height="8" viewBox="0 0 5 8"><path d="M1 1 L4 4 L1 7" fill="none" stroke="#adadad" stroke-width="1.35"/></svg>
<svg style="left:26.7px;top:220.0px" width="12" height="11" viewBox="0 0 12 11"><path d="M0.5 2.5 L0.5 9.5 L8.5 9.5 L10.5 5 L8.8 5 L8.8 3.5 L4.5 3.5 L3.6 2.3 L1.2 2.3 Z" fill="#f4dc92" stroke="#a88430" stroke-width="0.85"/><rect x="6.3" y="0.8" width="4" height="3.6" fill="#a8c0ec" stroke="#5d7fc8" stroke-width="0.7"/><rect x="7.3" y="6.6" width="3.6" height="4" rx="0.9" fill="#f6c452" stroke="#c88c1c" stroke-width="0.6"/></svg>
<span class="t" style="left:41.8px;top:219.50px;line-height:12px;font-size:9.3px;color:#111;transform:scaleX(0.9335);">board</span>
<svg style="left:17.8px;top:234.7px" width="5" height="8" viewBox="0 0 5 8"><path d="M1 1 L4 4 L1 7" fill="none" stroke="#adadad" stroke-width="1.35"/></svg>
<svg style="left:26.7px;top:233.2px" width="12" height="11" viewBox="0 0 12 11"><path d="M0.5 2.5 L0.5 9.5 L8.5 9.5 L10.5 5 L8.8 5 L8.8 3.5 L4.5 3.5 L3.6 2.3 L1.2 2.3 Z" fill="#f4dc92" stroke="#a88430" stroke-width="0.85"/><rect x="6.3" y="0.8" width="4" height="3.6" fill="#a8c0ec" stroke="#5d7fc8" stroke-width="0.7"/><rect x="7.3" y="6.6" width="3.6" height="4" rx="0.9" fill="#f6c452" stroke="#c88c1c" stroke-width="0.6"/></svg>
<span class="t" style="left:41.8px;top:232.70px;line-height:12px;font-size:9.3px;color:#111;transform:scaleX(0.9826);">component</span>
<svg style="left:17.8px;top:247.89999999999998px" width="5" height="8" viewBox="0 0 5 8"><path d="M1 1 L4 4 L1 7" fill="none" stroke="#adadad" stroke-width="1.35"/></svg>
<svg style="left:26.7px;top:246.39999999999998px" width="12" height="11" viewBox="0 0 12 11"><path d="M0.5 2.5 L0.5 9.5 L8.5 9.5 L10.5 5 L8.8 5 L8.8 3.5 L4.5 3.5 L3.6 2.3 L1.2 2.3 Z" fill="#f4dc92" stroke="#a88430" stroke-width="0.85"/><rect x="6.3" y="0.8" width="4" height="3.6" fill="#a8c0ec" stroke="#5d7fc8" stroke-width="0.7"/><rect x="7.3" y="6.6" width="3.6" height="4" rx="0.9" fill="#f6c452" stroke="#c88c1c" stroke-width="0.6"/></svg>
<span class="t" style="left:41.8px;top:245.90px;line-height:12px;font-size:9.3px;color:#111;transform:scaleX(0.9153);">device</span>
<svg style="left:17.8px;top:261.1px" width="5" height="8" viewBox="0 0 5 8"><path d="M1 1 L4 4 L1 7" fill="none" stroke="#adadad" stroke-width="1.35"/></svg>
<svg style="left:26.7px;top:259.6px" width="12" height="11" viewBox="0 0 12 11"><path d="M0.5 2.5 L0.5 9.5 L8.5 9.5 L10.5 5 L8.8 5 L8.8 3.5 L4.5 3.5 L3.6 2.3 L1.2 2.3 Z" fill="#f4dc92" stroke="#a88430" stroke-width="0.85"/><rect x="6.3" y="0.8" width="4" height="3.6" fill="#a8c0ec" stroke="#5d7fc8" stroke-width="0.7"/><rect x="7.3" y="6.6" width="3.6" height="4" rx="0.9" fill="#f6c452" stroke="#c88c1c" stroke-width="0.6"/></svg>
<span class="t" style="left:41.8px;top:259.10px;line-height:12px;font-size:9.3px;color:#111;transform:scaleX(0.9066);">drivers</span>
<svg style="left:17px;top:276.29999999999995px" width="8" height="5" viewBox="0 0 8 5"><path d="M1 1 L4 4 L7 1" fill="none" stroke="#404040" stroke-width="1.3"/></svg>
<svg style="left:26.7px;top:272.79999999999995px" width="12" height="11" viewBox="0 0 12 11"><path d="M0.5 2.5 L0.5 9.5 L8.5 9.5 L10.5 5 L8.8 5 L8.8 3.5 L4.5 3.5 L3.6 2.3 L1.2 2.3 Z" fill="#f4dc92" stroke="#a88430" stroke-width="0.85"/><rect x="6.3" y="0.8" width="4" height="3.6" fill="#a8c0ec" stroke="#5d7fc8" stroke-width="0.7"/><rect x="7.3" y="6.6" width="3.6" height="4" rx="0.9" fill="#f6c452" stroke="#c88c1c" stroke-width="0.6"/></svg>
<span class="t" style="left:41.8px;top:272.30px;line-height:12px;font-size:9.3px;color:#111;transform:scaleX(0.9209);">source</span>
<svg style="left:29.4px;top:287.5px" width="5" height="8" viewBox="0 0 5 8"><path d="M1 1 L4 4 L1 7" fill="none" stroke="#adadad" stroke-width="1.35"/></svg>
<svg style="left:40px;top:286.0px" width="10" height="12" viewBox="0 0 10 12"><path d="M0.5 0.5 L5.8 0.5 L8.5 3.2 L8.5 10.5 L0.5 10.5 Z" fill="#fdfcf6" stroke="#a8986a" stroke-width="0.85"/><path d="M5.8 0.5 L5.8 3.2 L8.5 3.2" fill="#efe6c8" stroke="#a8986a" stroke-width="0.6"/><text x="1.6" y="8.4" font-family="Liberation Sans, sans-serif" font-size="7.6" font-weight="bold" fill="#5a86c8">c</text><rect x="5.6" y="7.4" width="3.6" height="4" rx="0.9" fill="#f6c452" stroke="#c88c1c" stroke-width="0.6"/></svg>
<span class="t" style="left:53.8px;top:285.50px;line-height:12px;font-size:9.3px;color:#111;transform:scaleX(0.9519);">application.c</span>
<svg style="left:29.4px;top:300.7px" width="5" height="8" viewBox="0 0 5 8"><path d="M1 1 L4 4 L1 7" fill="none" stroke="#adadad" stroke-width="1.35"/></svg>
<svg style="left:40px;top:299.2px" width="10" height="12" viewBox="0 0 10 12"><path d="M0.5 0.5 L5.8 0.5 L8.5 3.2 L8.5 10.5 L0.5 10.5 Z" fill="#fdfcf6" stroke="#a8986a" stroke-width="0.85"/><path d="M5.8 0.5 L5.8 3.2 L8.5 3.2" fill="#efe6c8" stroke="#a8986a" stroke-width="0.6"/><text x="1.6" y="8.4" font-family="Liberation Sans, sans-serif" font-size="7.6" font-weight="bold" fill="#2f4f9f">h</text><rect x="5.6" y="7.4" width="3.6" height="4" rx="0.9" fill="#f6c452" stroke="#c88c1c" stroke-width="0.6"/></svg>
<span class="t" style="left:53.8px;top:298.70px;line-height:12px;font-size:9.3px;color:#111;transform:scaleX(0.9575);">application.h</span>
<svg style="left:29.4px;top:313.9px" width="5" height="8" viewBox="0 0 5 8"><path d="M1 1 L4 4 L1 7" fill="none" stroke="#adadad" stroke-width="1.35"/></svg>
<svg style="left:40px;top:312.4px" width="10" height="12" viewBox="0 0 10 12"><path d="M0.5 0.5 L5.8 0.5 L8.5 3.2 L8.5 10.5 L0.5 10.5 Z" fill="#fdfcf6" stroke="#a8986a" stroke-width="0.85"/><path d="M5.8 0.5 L5.8 3.2 L8.5 3.2" fill="#efe6c8" stroke="#a8986a" stroke-width="0.6"/><text x="1.6" y="8.4" font-family="Liberation Sans, sans-serif" font-size="7.6" font-weight="bold" fill="#2f4f9f">h</text><rect x="5.6" y="7.4" width="3.6" height="4" rx="0.9" fill="#f6c452" stroke="#c88c1c" stroke-width="0.6"/></svg>
<span class="t" style="left:53.8px;top:311.90px;line-height:12px;font-size:9.3px;color:#111;transform:scaleX(0.9664);">IncludeMcuLibConfig.h</span>
<svg style="left:29.4px;top:327.1px" width="5" height="8" viewBox="0 0 5 8"><path d="M1 1 L4 4 L1 7" fill="none" stroke="#adadad" stroke-width="1.35"/></svg>
<svg style="left:40px;top:325.6px" width="10" height="12" viewBox="0 0 10 12"><path d="M0.5 0.5 L5.8 0.5 L8.5 3.2 L8.5 10.5 L0.5 10.5 Z" fill="#fdfcf6" stroke="#a8986a" stroke-width="0.85"/><path d="M5.8 0.5 L5.8 3.2 L8.5 3.2" fill="#efe6c8" stroke="#a8986a" stroke-width="0.6"/><text x="1.6" y="8.4" font-family="Liberation Sans, sans-serif" font-size="7.6" font-weight="bold" fill="#2f4f9f">h</text><rect x="5.6" y="7.4" width="3.6" height="4" rx="0.9" fill="#f6c452" stroke="#c88c1c" stroke-width="0.6"/></svg>
<span class="t" style="left:53.8px;top:325.10px;line-height:12px;font-size:9.3px;color:#111;transform:scaleX(0.9252);">leds_config.h</span>
<svg style="left:29.4px;top:340.29999999999995px" width="5" height="8" viewBox="0 0 5 8"><path d="M1 1 L4 4 L1 7" fill="none" stroke="#adadad" stroke-width="1.35"/></svg>
<svg style="left:40px;top:338.79999999999995px" width="10" height="12" viewBox="0 0 10 12"><path d="M0.5 0.5 L5.8 0.5 L8.5 3.2 L8.5 10.5 L0.5 10.5 Z" fill="#fdfcf6" stroke="#a8986a" stroke-width="0.85"/><path d="M5.8 0.5 L5.8 3.2 L8.5 3.2" fill="#efe6c8" stroke="#a8986a" stroke-width="0.6"/><text x="1.6" y="8.4" font-family="Liberation Sans, sans-serif" font-size="7.6" font-weight="bold" fill="#5a86c8">c</text><rect x="5.6" y="7.4" width="3.6" height="4" rx="0.9" fill="#f6c452" stroke="#c88c1c" stroke-width="0.6"/></svg>
<span class="t" style="left:53.8px;top:338.30px;line-height:12px;font-size:9.3px;color:#111;transform:scaleX(0.8725);">leds.c</span>
<svg style="left:29.4px;top:353.5px" width="5" height="8" viewBox="0 0 5 8"><path d="M1 1 L4 4 L1 7" fill="none" stroke="#adadad" stroke-width="1.35"/></svg>
<svg style="left:40px;top:352.0px" width="10" height="12" viewBox="0 0 10 12"><path d="M0.5 0.5 L5.8 0.5 L8.5 3.2 L8.5 10.5 L0.5 10.5 Z" fill="#fdfcf6" stroke="#a8986a" stroke-width="0.85"/><path d="M5.8 0.5 L5.8 3.2 L8.5 3.2" fill="#efe6c8" stroke="#a8986a" stroke-width="0.6"/><text x="1.6" y="8.4" font-family="Liberation Sans, sans-serif" font-size="7.6" font-weight="bold" fill="#2f4f9f">h</text><rect x="5.6" y="7.4" width="3.6" height="4" rx="0.9" fill="#f6c452" stroke="#c88c1c" stroke-width="0.6"/></svg>
<span class="t" style="left:53.8px;top:351.50px;line-height:12px;font-size:9.3px;color:#111;transform:scaleX(0.8947);">leds.h</span>
<svg style="left:29.4px;top:366.7px" width="5" height="8" viewBox="0 0 5 8"><path d="M1 1 L4 4 L1 7" fill="none" stroke="#adadad" stroke-width="1.35"/></svg>
<svg style="left:40px;top:365.2px" width="10" height="12" viewBox="0 0 10 12"><path d="M0.5 0.5 L5.8 0.5 L8.5 3.2 L8.5 10.5 L0.5 10.5 Z" fill="#fdfcf6" stroke="#a8986a" stroke-width="0.85"/><path d="M5.8 0.5 L5.8 3.2 L8.5 3.2" fill="#efe6c8" stroke="#a8986a" stroke-width="0.6"/><text x="1.6" y="8.4" font-family="Liberation Sans, sans-serif" font-size="7.6" font-weight="bold" fill="#5a86c8">c</text><rect x="5.6" y="7.4" width="3.6" height="4" rx="0.9" fill="#f6c452" stroke="#c88c1c" stroke-width="0.6"/></svg>
<span class="t" style="left:53.8px;top:364.70px;line-height:12px;font-size:9.3px;color:#111;transform:scaleX(0.9383);">main.c</span>
<svg style="left:29.4px;top:379.9px" width="5" height="8" viewBox="0 0 5 8"><path d="M1 1 L4 4 L1 7" fill="none" stroke="#adadad" stroke-width="1.35"/></svg>
<svg style="left:40px;top:378.4px" width="10" height="12" viewBox="0 0 10 12"><path d="M0.5 0.5 L5.8 0.5 L8.5 3.2 L8.5 10.5 L0.5 10.5 Z" fill="#fdfcf6" stroke="#a8986a" stroke-width="0.85"/><path d="M5.8 0.5 L5.8 3.2 L8.5 3.2" fill="#efe6c8" stroke="#a8986a" stroke-width="0.6"/><text x="1.6" y="8.4" font-family="Liberation Sans, sans-serif" font-size="7.6" font-weight="bold" fill="#2f4f9f">h</text><rect x="5.6" y="7.4" width="3.6" height="4" rx="0.9" fill="#f6c452" stroke="#c88c1c" stroke-width="0.6"/></svg>
<span class="t" style="left:53.8px;top:377.90px;line-height:12px;font-size:9.3px;color:#111;transform:scaleX(0.9519);">NeoConfig.h</span>
<div style="left:36.6px;top:391.09999999999997px;width:59.4px;height:12px;background:#d9d9d9;"></div>
<svg style="left:29.4px;top:393.09999999999997px" width="5" height="8" viewBox="0 0 5 8"><path d="M1 1 L4 4 L1 7" fill="none" stroke="#adadad" stroke-width="1.35"/></svg>
<svg style="left:40px;top:391.59999999999997px" width="10" height="12" viewBox="0 0 10 12"><path d="M0.5 0.5 L5.8 0.5 L8.5 3.2 L8.5 10.5 L0.5 10.5 Z" fill="#fdfcf6" stroke="#a8986a" stroke-width="0.85"/><path d="M5.8 0.5 L5.8 3.2 L8.5 3.2" fill="#efe6c8" stroke="#a8986a" stroke-width="0.6"/><text x="1.6" y="8.4" font-family="Liberation Sans, sans-serif" font-size="7.6" font-weight="bold" fill="#5a86c8">c</text><rect x="5.6" y="7.4" width="3.6" height="4" rx="0.9" fill="#f6c452" stroke="#c88c1c" stroke-width="0.6"/></svg>
<span class="t" style="left:53.8px;top:391.10px;line-height:12px;font-size:9.3px;color:#111;transform:scaleX(0.9001);">NeoPixel.c</span>
<svg style="left:29.4px;top:406.29999999999995px" width="5" height="8" viewBox="0 0 5 8"><path d="M1 1 L4 4 L1 7" fill="none" stroke="#adadad" stroke-width="1.35"/></svg>
<svg style="left:40px;top:404.79999999999995px" width="10" height="12" viewBox="0 0 10 12"><path d="M0.5 0.5 L5.8 0.5 L8.5 3.2 L8.5 10.5 L0.5 10.5 Z" fill="#fdfcf6" stroke="#a8986a" stroke-width="0.85"/><path d="M5.8 0.5 L5.8 3.2 L8.5 3.2" fill="#efe6c8" stroke="#a8986a" stroke-width="0.6"/><text x="1.6" y="8.4" font-family="Liberation Sans, sans-serif" font-size="7.6" font-weight="bold" fill="#2f4f9f">h</text><rect x="5.6" y="7.4" width="3.6" height="4" rx="0.9" fill="#f6c452" stroke="#c88c1c" stroke-width="0.6"/></svg>
<span class="t" style="left:53.8px;top:404.30px;line-height:12px;font-size:9.3px;color:#111;transform:scaleX(0.9206);">NeoPixel.h</span>
<svg style="left:29.4px;top:419.5px" width="5" height="8" viewBox="0 0 5 8"><path d="M1 1 L4 4 L1 7" fill="none" stroke="#adadad" stroke-width="1.35"/></svg>
<svg style="left:40px;top:418.0px" width="10" height="12" viewBox="0 0 10 12"><path d="M0.5 0.5 L5.8 0.5 L8.5 3.2 L8.5 10.5 L0.5 10.5 Z" fill="#fdfcf6" stroke="#a8986a" stroke-width="0.85"/><path d="M5.8 0.5 L5.8 3.2 L8.5 3.2" fill="#efe6c8" stroke="#a8986a" stroke-width="0.6"/><text x="1.6" y="8.4" font-family="Liberation Sans, sans-serif" font-size="7.6" font-weight="bold" fill="#5a86c8">c</text><rect x="5.6" y="7.4" width="3.6" height="4" rx="0.9" fill="#f6c452" stroke="#c88c1c" stroke-width="0.6"/></svg>
<span class="t" style="left:53.8px;top:417.50px;line-height:12px;font-size:9.3px;color:#111;transform:scaleX(0.8898);">PixelTransfer.c</span>
<svg style="left:29.4px;top:432.7px" width="5" height="8" viewBox="0 0 5 8"><path d="M1 1 L4 4 L1 7" fill="none" stroke="#adadad" stroke-width="1.35"/></svg>
<svg style="left:40px;top:431.2px" width="10" height="12" viewBox="0 0 10 12"><path d="M0.5 0.5 L5.8 0.5 L8.5 3.2 L8.5 10.5 L0.5 10.5 Z" fill="#fdfcf6" stroke="#a8986a" stroke-width="0.85"/><path d="M5.8 0.5 L5.8 3.2 L8.5 3.2" fill="#efe6c8" stroke="#a8986a" stroke-width="0.6"/><text x="1.6" y="8.4" font-family="Liberation Sans, sans-serif" font-size="7.6" font-weight="bold" fill="#2f4f9f">h</text><rect x="5.6" y="7.4" width="3.6" height="4" rx="0.9" fill="#f6c452" stroke="#c88c1c" stroke-width="0.6"/></svg>
<span class="t" style="left:53.8px;top:430.70px;line-height:12px;font-size:9.3px;color:#111;transform:scaleX(0.8983);">PixelTransfer.h</span>
<svg style="left:29.4px;top:445.9px" width="5" height="8" viewBox="0 0 5 8"><path d="M1 1 L4 4 L1 7" fill="none" stroke="#adadad" stroke-width="1.35"/></svg>
<svg style="left:40px;top:444.4px" width="10" height="12" viewBox="0 0 10 12"><path d="M0.5 0.5 L5.8 0.5 L8.5 3.2 L8.5 10.5 L0.5 10.5 Z" fill="#fdfcf6" stroke="#a8986a" stroke-width="0.85"/><path d="M5.8 0.5 L5.8 3.2 L8.5 3.2" fill="#efe6c8" stroke="#a8986a" stroke-width="0.6"/><text x="1.6" y="8.4" font-family="Liberation Sans, sans-serif" font-size="7.6" font-weight="bold" fill="#5a86c8">c</text><rect x="5.6" y="7.4" width="3.6" height="4" rx="0.9" fill="#f6c452" stroke="#c88c1c" stroke-width="0.6"/></svg>
<span class="t" style="left:53.8px;top:443.90px;line-height:12px;font-size:9.3px;color:#111;transform:scaleX(0.9724);">platform.c</span>
<svg style="left:29.4px;top:459.09999999999997px" width="5" height="8" viewBox="0 0 5 8"><path d="M1 1 L4 4 L1 7" fill="none" stroke="#adadad" stroke-width="1.35"/></svg>
<svg style="left:40px;top:457.59999999999997px" width="10" height="12" viewBox="0 0 10 12"><path d="M0.5 0.5 L5.8 0.5 L8.5 3.2 L8.5 10.5 L0.5 10.5 Z" fill="#fdfcf6" stroke="#a8986a" stroke-width="0.85"/><path d="M5.8 0.5 L5.8 3.2 L8.5 3.2" fill="#efe6c8" stroke="#a8986a" stroke-width="0.6"/><text x="1.6" y="8.4" font-family="Liberation Sans, sans-serif" font-size="7.6" font-weight="bold" fill="#2f4f9f">h</text><rect x="5.6" y="7.4" width="3.6" height="4" rx="0.9" fill="#f6c452" stroke="#c88c1c" stroke-width="0.6"/></svg>
<span class="t" style="left:53.8px;top:457.10px;line-height:12px;font-size:9.3px;color:#111;transform:scaleX(0.9772);">platform.h</span>
<svg style="left:29.4px;top:472.29999999999995px" width="5" height="8" viewBox="0 0 5 8"><path d="M1 1 L4 4 L1 7" fill="none" stroke="#adadad" stroke-width="1.35"/></svg>
<svg style="left:40px;top:470.79999999999995px" width="10" height="12" viewBox="0 0 10 12"><path d="M0.5 0.5 L5.8 0.5 L8.5 3.2 L8.5 10.5 L0.5 10.5 Z" fill="#fdfcf6" stroke="#a8986a" stroke-width="0.85"/><path d="M5.8 0.5 L5.8 3.2 L8.5 3.2" fill="#efe6c8" stroke="#a8986a" stroke-width="0.6"/><text x="1.6" y="8.4" font-family="Liberation Sans, sans-serif" font-size="7.6" font-weight="bold" fill="#5a86c8">c</text><rect x="5.6" y="7.4" width="3.6" height="4" rx="0.9" fill="#f6c452" stroke="#c88c1c" stroke-width="0.6"/></svg>
<span class="t" style="left:53.8px;top:470.30px;line-height:12px;font-size:9.3px;color:#111;transform:scaleX(0.9167);">plu_setup.c</span>
<svg style="left:29.4px;top:485.5px" width="5" height="8" viewBox="0 0 5 8"><path d="M1 1 L4 4 L1 7" fill="none" stroke="#adadad" stroke-width="1.35"/></svg>
<svg style="left:40px;top:484.0px" width="10" height="12" viewBox="0 0 10 12"><path d="M0.5 0.5 L5.8 0.5 L8.5 3.2 L8.5 10.5 L0.5 10.5 Z" fill="#fdfcf6" stroke="#a8986a" stroke-width="0.85"/><path d="M5.8 0.5 L5.8 3.2 L8.5 3.2" fill="#efe6c8" stroke="#a8986a" stroke-width="0.6"/><text x="1.6" y="8.4" font-family="Liberation Sans, sans-serif" font-size="7.6" font-weight="bold" fill="#2f4f9f">h</text><rect x="5.6" y="7.4" width="3.6" height="4" rx="0.9" fill="#f6c452" stroke="#c88c1c" stroke-width="0.6"/></svg>
<span class="t" style="left:53.8px;top:483.50px;line-height:12px;font-size:9.3px;color:#111;transform:scaleX(0.9193);">plu_setup.h</span>
<svg style="left:29.4px;top:498.7px" width="5" height="8" viewBox="0 0 5 8"><path d="M1 1 L4 4 L1 7" fill="none" stroke="#adadad" stroke-width="1.35"/></svg>
<svg style="left:40px;top:497.2px" width="10" height="12" viewBox="0 0 10 12"><path d="M0.5 0.5 L5.8 0.5 L8.5 3.2 L8.5 10.5 L0.5 10.5 Z" fill="#fdfcf6" stroke="#a8986a" stroke-width="0.85"/><path d="M5.8 0.5 L5.8 3.2 L8.5 3.2" fill="#efe6c8" stroke="#a8986a" stroke-width="0.6"/><text x="1.6" y="8.4" font-family="Liberation Sans, sans-serif" font-size="7.6" font-weight="bold" fill="#5a86c8">c</text><rect x="5.6" y="7.4" width="3.6" height="4" rx="0.9" fill="#f6c452" stroke="#c88c1c" stroke-width="0.6"/></svg>
<span class="t" style="left:53.8px;top:496.70px;line-height:12px;font-size:9.3px;color:#111;transform:scaleX(0.8818);">ws2812b.c</span>
<svg style="left:29.4px;top:511.9px" width="5" height="8" viewBox="0 0 5 8"><path d="M1 1 L4 4 L1 7" fill="none" stroke="#adadad" stroke-width="1.35"/></svg>
<svg style="left:40px;top:510.4px" width="10" height="12" viewBox="0 0 10 12"><path d="M0.5 0.5 L5.8 0.5 L8.5 3.2 L8.5 10.5 L0.5 10.5 Z" fill="#fdfcf6" stroke="#a8986a" stroke-width="0.85"/><path d="M5.8 0.5 L5.8 3.2 L8.5 3.2" fill="#efe6c8" stroke="#a8986a" stroke-width="0.6"/><text x="1.6" y="8.4" font-family="Liberation Sans, sans-serif" font-size="7.6" font-weight="bold" fill="#2f4f9f">h</text><rect x="5.6" y="7.4" width="3.6" height="4" rx="0.9" fill="#f6c452" stroke="#c88c1c" stroke-width="0.6"/></svg>
<span class="t" style="left:53.8px;top:509.90px;line-height:12px;font-size:9.3px;color:#111;transform:scaleX(0.8851);">ws2812b.h</span>
<svg style="left:17.8px;top:525.0999999999999px" width="5" height="8" viewBox="0 0 5 8"><path d="M1 1 L4 4 L1 7" fill="none" stroke="#adadad" stroke-width="1.35"/></svg>
<svg style="left:26.7px;top:523.5999999999999px" width="12" height="11" viewBox="0 0 12 11"><path d="M0.5 2.5 L0.5 9.5 L8.5 9.5 L10.5 5 L8.8 5 L8.8 3.5 L4.5 3.5 L3.6 2.3 L1.2 2.3 Z" fill="#f4dc92" stroke="#a88430" stroke-width="0.85"/><rect x="6.3" y="0.8" width="4" height="3.6" fill="#a8c0ec" stroke="#5d7fc8" stroke-width="0.7"/><rect x="7.3" y="6.6" width="3.6" height="4" rx="0.9" fill="#f6c452" stroke="#c88c1c" stroke-width="0.6"/></svg>
<span class="t" style="left:41.8px;top:523.10px;line-height:12px;font-size:9.3px;color:#111;transform:scaleX(0.9359);">startup</span>
<svg style="left:17.8px;top:538.3px" width="5" height="8" viewBox="0 0 5 8"><path d="M1 1 L4 4 L1 7" fill="none" stroke="#adadad" stroke-width="1.35"/></svg>
<svg style="left:26.7px;top:536.8px" width="12" height="11" viewBox="0 0 12 11"><path d="M0.5 2.5 L0.5 9.5 L8.5 9.5 L10.5 5 L8.8 5 L8.8 3.5 L4.5 3.5 L3.6 2.3 L1.2 2.3 Z" fill="#f4dc92" stroke="#a88430" stroke-width="0.85"/><rect x="6.3" y="0.8" width="4" height="3.6" fill="#a8c0ec" stroke="#5d7fc8" stroke-width="0.7"/><rect x="7.3" y="6.6" width="3.6" height="4" rx="0.9" fill="#f6c452" stroke="#c88c1c" stroke-width="0.6"/></svg>
<span class="t" style="left:41.8px;top:536.30px;line-height:12px;font-size:9.3px;color:#111;transform:scaleX(0.9711);">utilities</span>
<svg style="left:17.8px;top:551.5px" width="5" height="8" viewBox="0 0 5 8"><path d="M1 1 L4 4 L1 7" fill="none" stroke="#adadad" stroke-width="1.35"/></svg>
<svg style="left:26.7px;top:550.5px" width="12" height="10" viewBox="0 0 12 10"><path d="M0.5 1.5 L0.5 9 L9 9 L11.3 4.3 L9.3 4.3 L9.3 2.8 L4.8 2.8 L3.8 1.5 Z" fill="#f7e6a8" stroke="#b9913c" stroke-width="0.8"/><path d="M0.8 9 L3 4.5 L11.2 4.5" fill="none" stroke="#b9913c" stroke-width="0.7"/></svg>
<span class="t" style="left:41.8px;top:549.50px;line-height:12px;font-size:9.3px;color:#111;transform:scaleX(0.9195);">Debug</span>
<svg style="left:26.7px;top:563.2px" width="11" height="11" viewBox="0 0 11 11"><rect x="0" y="0" width="11" height="11" rx="1" fill="#1f6b4a"/><path d="M2.5 2.5 L8.5 8.5 M8.5 2.5 L2.5 8.5" stroke="#d8efe0" stroke-width="1.6"/></svg>
<span class="t" style="left:41.8px;top:562.70px;line-height:12px;font-size:9.3px;color:#111;transform:scaleX(0.8876);">LPC804_Blinky.mex</span>
<div style="left:0px;top:568.4px;width:344px;height:4px;background:#f0f0f0;"></div>
<div style="left:0px;top:568.4px;width:344px;height:0.8px;background:#e4e4e4;"></div>
<svg style="left:333.8px;top:91.6px" width="7" height="4.6" viewBox="0 0 8 5"><path d="M1 4 L4 1 L7 4" fill="none" stroke="#484848" stroke-width="1.9"/></svg>
<svg style="left:333.8px;top:559.6px" width="7" height="4.6" viewBox="0 0 8 5"><path d="M1 1 L4 4 L7 1" fill="none" stroke="#484848" stroke-width="1.9"/></svg>
<svg style="left:3px;top:55.5px" width="12.5" height="11.5" viewBox="0 0 16 15"><path d="M1 1 H6.5 L9 3.5 V9 H1 Z" fill="#eeeef0" stroke="#a8a8b0" stroke-width="0.9"/><path d="M3.5 6.5 H8 L9 8 H15 V14.3 H3.5 Z" fill="#f4d67a" stroke="#b8923a" stroke-width="0.9"/><path d="M4 9.3 H14.6" stroke="#f9e9b0" stroke-width="1"/></svg>
<svg style="left:77px;top:57.5px" width="8" height="8" viewBox="0 0 8 8"><path d="M0.6 0.6 L2.3 0.6 L4 2.5 L5.7 0.6 L7.4 0.6 L7.4 2.3 L5.5 4 L7.4 5.7 L7.4 7.4 L5.7 7.4 L4 5.5 L2.3 7.4 L0.6 7.4 L0.6 5.7 L2.5 4 L0.6 2.3 Z" fill="#ffffff" stroke="#7a7a7a" stroke-width="0.75"/></svg>
<svg style="left:93.8px;top:56.5px" width="10" height="9.5" viewBox="0 0 16 15"><rect x="0.8" y="0.8" width="14.4" height="13.4" fill="#f6f8fc" stroke="#6f7f9a" stroke-width="1.5"/><rect x="0.8" y="0.8" width="14.4" height="2.6" fill="#8a9ab8"/><path d="M6 3 V14" stroke="#8a9ab8" stroke-width="1.2"/></svg>
<svg style="left:155px;top:55.5px" width="10.5" height="12" viewBox="0 0 14 16"><path d="M1 3 Q1 1 4.5 1 Q8 1 8 3 V10 Q8 12 4.5 12 Q1 12 1 10 Z" fill="#f6d448" stroke="#b38c14" stroke-width="1"/><ellipse cx="4.5" cy="3" rx="3.5" ry="1.7" fill="#fbe88c" stroke="#b38c14" stroke-width="0.8"/><path d="M5 6.5 Q5 4.5 9 4.5 Q13 4.5 13 6.5 V13 Q13 15 9 15 Q5 15 5 13 Z" fill="#f8d850" stroke="#b38c14" stroke-width="1"/><ellipse cx="9" cy="6.5" rx="4" ry="1.8" fill="#fcec98" stroke="#b38c14" stroke-width="0.8"/></svg>
<svg style="left:226px;top:56px" width="11.5" height="11" viewBox="0 0 16 15"><rect x="3.5" y="0.8" width="8" height="5" fill="#eef4fd" stroke="#6a94d8" stroke-width="1.2"/><rect x="1" y="10.4" width="5" height="3.8" fill="#fdf0c0" stroke="#d8a020" stroke-width="1.2"/><rect x="10" y="10.4" width="5" height="3.8" fill="#fdf0c0" stroke="#d8a020" stroke-width="1.2"/><path d="M7.5 5.8 V8.2 M3.5 10.4 V8.2 H12.5 V10.4" fill="none" stroke="#d8a020" stroke-width="1.1"/></svg>
<svg style="left:312px;top:58px" width="7" height="3" viewBox="0 0 7 3"><rect x="0.4" y="0.4" width="6.2" height="2.2" fill="#fff" stroke="#747474" stroke-width="0.85"/></svg>
<svg style="left:328.4px;top:58.2px" width="7.5" height="6.8" viewBox="0 0 7.5 6.8"><rect x="0.4" y="0.4" width="6.7" height="6" fill="#fff" stroke="#747474" stroke-width="0.85"/><rect x="0.4" y="0.4" width="6.7" height="1.5" fill="#747474"/></svg>
<svg style="left:205.5px;top:74.5px" width="10" height="9.5" viewBox="0 0 16 15"><path d="M3 1 H15 V11" fill="none" stroke="#b4c8e4" stroke-width="1.1"/><rect x="1" y="3" width="12" height="11" fill="#e6effb" stroke="#8eaedc" stroke-width="1.2"/><rect x="1" y="3" width="12" height="2.2" fill="#b8cdec"/><path d="M3.6 9.4 H10.4" stroke="#2c4a86" stroke-width="1.9"/></svg>
<div style="left:219.3px;top:71px;width:16.4px;height:15.7px;background:#cce4f7;border:0.5px solid #b4d6f0;box-sizing:border-box;"></div>
<svg style="left:221.5px;top:73.5px" width="11.5" height="11" viewBox="0 0 16 15"><path d="M13 3.5 H6 V1 L1.5 4.6 L6 8.2 V5.8 H13 Z" fill="#f9dc6a" stroke="#c0901c" stroke-width="1"/><path d="M3 10 H10 V7.5 L14.5 11 L10 14.6 V12.2 H3 Z" fill="#f9dc6a" stroke="#c0901c" stroke-width="1"/></svg>
<svg style="left:239.5px;top:73.5px" width="10.5" height="11.5" viewBox="0 0 15 16"><path d="M1 1.5 H14 L9 7.5 V14.5 L6 12.5 V7.5 Z" fill="#fafbfd" stroke="#98a6b8" stroke-width="1.25"/></svg>
<div style="left:255.4px;top:73.5px;width:1.2px;height:11.5px;background:#c6c6c6;"></div>
<svg style="left:262px;top:74.5px" width="9" height="9" viewBox="0 0 14 14"><rect x="1" y="1" width="12" height="12" fill="#d8d8d8" stroke="#8c8c8c" stroke-width="1.3"/><path d="M1 7 H13 M7 1 V13" stroke="#8c8c8c" stroke-width="1.3"/></svg>
<svg style="left:279px;top:74px" width="10" height="10.5" viewBox="0 0 16 16"><path d="M2 7 Q2 2.5 7 2.5 H9 V0.8 L12.5 3.8 L9 6.5 V4.8 H7 Q4.5 4.8 4.5 7 Z" fill="#f0f0f0" stroke="#ababab" stroke-width="0.9"/><path d="M14 9 Q14 13.5 9 13.5 H7 V15.2 L3.5 12.2 L7 9.5 V11.2 H9 Q11.5 11.2 11.5 9 Z" fill="#f0f0f0" stroke="#ababab" stroke-width="0.9"/></svg>
<div style="left:294.4px;top:73.5px;width:1.2px;height:11.5px;background:#c6c6c6;"></div>
<svg style="left:301px;top:72.5px" width="13" height="12.5" viewBox="0 0 16 16"><rect x="0.3" y="0.3" width="15.4" height="15.4" rx="1.6" fill="#2f7d62" stroke="#1f5a44" stroke-width="0.8"/><path d="M4 3.5 L12 12.5 M12 3.5 L4 12.5" stroke="#123f2e" stroke-width="1.9"/></svg>
<svg style="left:318.2px;top:77.8px" width="5.4" height="3" viewBox="0 0 54 30"><path d="M0 0 L54 0 L27 30 Z" fill="#1a1a1a"/></svg>
<svg style="left:332.5px;top:74px" width="4.5" height="10.5" viewBox="0 0 6 14"><circle cx="3" cy="2.3" r="1.7" fill="#fff" stroke="#6a6a6a" stroke-width="0.9"/><circle cx="3" cy="7" r="1.7" fill="#fff" stroke="#6a6a6a" stroke-width="0.9"/><circle cx="3" cy="11.7" r="1.7" fill="#fff" stroke="#6a6a6a" stroke-width="0.9"/></svg>
<div style="left:347px;top:52.5px;width:677px;height:18.5px;background:#f0f0f0;"></div>
<div style="left:347px;top:52.4px;width:677px;height:0.8px;background:#e2e2e2;"></div>
<div style="left:347px;top:70.3px;width:677px;height:0.7px;background:#f8f8f8;"></div>
<div style="left:427.5px;top:53px;width:76px;height:18px;background:#ffffff;"></div>
<div style="left:347px;top:53px;width:1px;height:523px;background:#e9e9e9;"></div>
<div style="left:347px;top:575px;width:677px;height:1px;background:#e4e4e4;"></div>
<div style="left:348px;top:71px;width:676px;height:504px;background:#ffffff;"></div>
<div style="left:348px;top:71px;width:10px;height:492px;background:#f8f8f8;"></div>
<div style="left:381px;top:71px;width:619.5px;height:11px;background:#e8f2fe;"></div>
<div style="left:381px;top:71.5px;width:1.3px;height:10.5px;background:#000000;"></div>
<div style="left:1000.5px;top:71px;width:12px;height:492px;background:#f2f2f2;"></div>
<div style="left:1001px;top:83.5px;width:11px;height:66.5px;background:#cdcdcd;"></div>
<div style="left:1012.5px;top:71px;width:11.5px;height:504px;background:#f7f7f7;"></div>
<div style="left:381px;top:563.5px;width:619.5px;height:11px;background:#f0f0f0;"></div>
<div style="left:392px;top:563.5px;width:404.5px;height:11px;background:#cdcdcd;"></div>
<div style="left:1000.5px;top:563.5px;width:12px;height:11px;background:#f0f0f0;"></div>
<svg style="left:352.9px;top:56.5px" width="8" height="10" viewBox="0 0 8 10"><path d="M0.5 0.5 L5 0.5 L7.5 3 L7.5 9.5 L0.5 9.5 Z" fill="#fefefb" stroke="#b4a688" stroke-width="0.8"/><path d="M5 0.5 V3 H7.5" fill="none" stroke="#c4b898" stroke-width="0.6"/><rect x="1.5" y="3.2" width="4.6" height="5.4" fill="#eef3fd" stroke="#86a2da" stroke-width="0.55"/><text x="2.1" y="7.9" font-family="Liberation Sans, sans-serif" font-size="6" font-weight="bold" fill="#2c4a96">c</text></svg>
<span class="t" style="left:365px;top:55.50px;line-height:12px;font-size:9.3px;color:#222;transform:scaleX(0.9198);">plu_setup.c</span>
<svg style="left:433px;top:56.5px" width="8" height="10" viewBox="0 0 8 10"><path d="M0.5 0.5 L5 0.5 L7.5 3 L7.5 9.5 L0.5 9.5 Z" fill="#fefefb" stroke="#b4a688" stroke-width="0.8"/><path d="M5 0.5 V3 H7.5" fill="none" stroke="#c4b898" stroke-width="0.6"/><rect x="1.5" y="3.2" width="4.6" height="5.4" fill="#eef3fd" stroke="#86a2da" stroke-width="0.55"/><text x="2.1" y="7.9" font-family="Liberation Sans, sans-serif" font-size="6" font-weight="bold" fill="#2c4a96">c</text></svg>
<span class="t" style="left:445.5px;top:55.50px;line-height:12px;font-size:9.3px;color:#222;transform:scaleX(0.8956);">NeoPixel.c</span>
<svg style="left:491.6px;top:58px" width="8" height="8" viewBox="0 0 8 8"><path d="M0.6 0.6 L2.3 0.6 L4 2.5 L5.7 0.6 L7.4 0.6 L7.4 2.3 L5.5 4 L7.4 5.7 L7.4 7.4 L5.7 7.4 L4 5.5 L2.3 7.4 L0.6 7.4 L0.6 5.7 L2.5 4 L0.6 2.3 Z" fill="#ffffff" stroke="#7a7a7a" stroke-width="0.75"/></svg>
<svg style="left:510px;top:56.5px" width="8" height="10" viewBox="0 0 8 10"><path d="M0.5 0.5 L5 0.5 L7.5 3 L7.5 9.5 L0.5 9.5 Z" fill="#fefefb" stroke="#b4a688" stroke-width="0.8"/><path d="M5 0.5 V3 H7.5" fill="none" stroke="#c4b898" stroke-width="0.6"/><rect x="1.5" y="3.2" width="4.6" height="5.4" fill="#eef3fd" stroke="#86a2da" stroke-width="0.55"/><text x="2.1" y="7.9" font-family="Liberation Sans, sans-serif" font-size="6" font-weight="bold" fill="#2c4a96">c</text></svg>
<span class="t" style="left:522.4px;top:55.50px;line-height:12px;font-size:9.3px;color:#222;transform:scaleX(0.8816);">PixelTransfer.c</span>
<svg style="left:601px;top:56.5px" width="8" height="10" viewBox="0 0 8 10"><path d="M0.5 0.5 L5 0.5 L7.5 3 L7.5 9.5 L0.5 9.5 Z" fill="#fefefb" stroke="#b4a688" stroke-width="0.8"/><path d="M5 0.5 V3 H7.5" fill="none" stroke="#c4b898" stroke-width="0.6"/><rect x="1.5" y="3.2" width="4.6" height="5.4" fill="#eef3fd" stroke="#86a2da" stroke-width="0.55"/><text x="2.1" y="7.9" font-family="Liberation Sans, sans-serif" font-size="6" font-weight="bold" fill="#2c4a96">c</text></svg>
<span class="t" style="left:612.7px;top:55.50px;line-height:12px;font-size:9.3px;color:#222;transform:scaleX(0.8773);">ws2812b.c</span>
<svg style="left:990.4px;top:57.8px" width="7" height="3" viewBox="0 0 7 3"><rect x="0.4" y="0.4" width="6.2" height="2.2" fill="#fff" stroke="#747474" stroke-width="0.85"/></svg>
<svg style="left:1006.6px;top:58px" width="7.6" height="7" viewBox="0 0 7.6 7"><rect x="0.4" y="0.4" width="6.8" height="6.2" fill="#fff" stroke="#747474" stroke-width="0.85"/><rect x="0.4" y="0.4" width="6.8" height="1.5" fill="#747474"/></svg>
<div style="left:348px;top:71px;width:652px;height:492.5px;overflow:hidden;">
<pre style="left:33px;top:2px;color:#141414;transform:scaleX(0.9493);"><span class="c">/*</span>
<span class="c"> * Copyright (c) 2020, Erich Styger</span>
<span class="c"> *</span>
<span class="c"> * SPDX-License-Identifier: BSD-3-Clause</span>
<span class="c"> */</span>

<span class="k">#include</span> <span class="s">"platform.h"</span>
<span class="k">#include</span> <span class="s">"NeoPixel.h"</span>
<span class="k">#include</span> <span class="s">"McuUtility.h"</span>
<span class="k">#include</span> <span class="s">"PixelTransfer.h"</span>

<span class="k">static</span> <span class="k">const</span> <span class="ty">uint8_t</span> gamma8[] = {
    0,  0,  0,  0,  0,  0,  0,  0,  0,  0,  0,  0,  0,  0,  0,  0,
    0,  0,  0,  0,  0,  0,  0,  0,  0,  0,  0,  0,  1,  1,  1,  1,
    1,  1,  1,  1,  1,  1,  1,  1,  1,  2,  2,  2,  2,  2,  2,  2,
    2,  3,  3,  3,  3,  3,  3,  3,  4,  4,  4,  4,  4,  5,  5,  5,
    5,  6,  6,  6,  6,  7,  7,  7,  7,  8,  8,  8,  9,  9,  9, 10,
   10, 10, 11, 11, 11, 12, 12, 13, 13, 13, 14, 14, 15, 15, 16, 16,
   17, 17, 18, 18, 19, 19, 20, 20, 21, 21, 22, 22, 23, 24, 24, 25,
   25, 26, 27, 27, 28, 29, 29, 30, 31, 32, 32, 33, 34, 35, 35, 36,
   37, 38, 39, 39, 40, 41, 42, 43, 44, 45, 46, 47, 48, 49, 50, 50,
   51, 52, 54, 55, 56, 57, 58, 59, 60, 61, 62, 63, 64, 66, 67, 68,
   69, 70, 72, 73, 74, 75, 77, 78, 79, 81, 82, 83, 85, 86, 87, 89,
   90, 92, 93, 95, 96, 98, 99,101,102,104,105,107,109,110,112,114,
  115,117,119,120,122,124,126,127,129,131,133,135,137,138,140,142,
  144,146,148,150,152,154,156,158,160,162,164,167,169,171,173,175,
  177,180,182,184,186,189,191,193,196,198,200,203,205,208,210,213,
  215,218,220,223,225,228,231,233,236,239,241,244,247,249,252,255
};

<span class="ty">uint8_t</span> <span class="f">NEO_GammaCorrect8</span>(<span class="ty">uint8_t</span> color) {
  <span class="k">return</span> gamma8[color];
}

<span class="ty">uint32_t</span> <span class="f">NEO_GammaCorrect24</span>(<span class="ty">uint32_t</span> rgb) {
  <span class="ty">uint8_t</span> r, g, b;

  r = NEO_GammaCorrect8((rgb&gt;&gt;16)&amp;0xff);
  g = NEO_GammaCorrect8((rgb&gt;&gt;8)&amp;0xff);
  b = NEO_GammaCorrect8(rgb&amp;0xff);
  rgb = (r&lt;&lt;16)|(g&lt;&lt;8)|b;
  <span class="k">return</span> rgb;
}

<span class="c">/* the ones below do not depend on hardware */</span></pre>
<pre style="left:8.12px;top:2px;color:#7c7c7c;-webkit-text-stroke:0;transform:scaleX(0.9493);">  1
  2
  3
  4
  5
  6
  7
  8
  9
 10
 11
 12
 13
 14
 15
 16
 17
 18
 19
 20
 21
 22
 23
 24
 25
 26
 27
 28
 29
 30
 31
 32
 33
 34
 35
 36
 37
 38
 39
 40
 41
 42
 43
 44
 45</pre>
</div>
<svg style="left:371.8px;top:73.8px" width="6" height="6" viewBox="0 0 6 6"><circle cx="3" cy="3" r="2.55" fill="#f2f6fb" stroke="#7f9cc2" stroke-width="0.75"/><path d="M1.5 3 L4.5 3" stroke="#46648f" stroke-width="0.85"/></svg>
<svg style="left:371.8px;top:403.8px" width="6" height="6" viewBox="0 0 6 6"><circle cx="3" cy="3" r="2.55" fill="#f2f6fb" stroke="#7f9cc2" stroke-width="0.75"/><path d="M1.5 3 L4.5 3" stroke="#46648f" stroke-width="0.85"/></svg>
<svg style="left:371.8px;top:447.8px" width="6" height="6" viewBox="0 0 6 6"><circle cx="3" cy="3" r="2.55" fill="#f2f6fb" stroke="#7f9cc2" stroke-width="0.75"/><path d="M1.5 3 L4.5 3" stroke="#46648f" stroke-width="0.85"/></svg>
<svg style="left:1002.6px;top:75.4px" width="7" height="4.6" viewBox="0 0 8 5"><path d="M1 4 L4 1 L7 4" fill="none" stroke="#484848" stroke-width="1.9"/></svg>
<svg style="left:1002.6px;top:554.4px" width="7" height="4.6" viewBox="0 0 8 5"><path d="M1 1 L4 4 L7 1" fill="none" stroke="#484848" stroke-width="1.9"/></svg>
<svg style="left:383px;top:565px" width="5" height="8" viewBox="0 0 5 8"><path d="M4 1 L1 4 L4 7" fill="none" stroke="#484848" stroke-width="1.8"/></svg>
<svg style="left:991.5px;top:565px" width="5" height="8" viewBox="0 0 5 8"><path d="M1 1 L4 4 L1 7" fill="none" stroke="#484848" stroke-width="1.8"/></svg>
<svg style="left:498.92px;top:90.8px" width="25.64" height="1.4" viewBox="0 0 25.64 1.4"><path d="M0.00 0.2 L1.05 1.2 L2.10 0.2 L3.15 1.2 L4.20 0.2 L5.25 1.2 L6.30 0.2 L7.35 1.2 L8.40 0.2 L9.45 1.2 L10.50 0.2 L11.55 1.2 L12.60 0.2 L13.65 1.2 L14.70 0.2 L15.75 1.2 L16.80 0.2 L17.85 1.2 L18.90 0.2 L19.95 1.2 L21.00 0.2 L22.05 1.2 L23.10 0.2 L24.15 1.2 L25.20 0.2" fill="none" stroke="#e09a8c" stroke-width="0.7"/></svg>
<svg style="left:529.68px;top:90.8px" width="30.76" height="1.4" viewBox="0 0 30.76 1.4"><path d="M0.00 0.2 L1.05 1.2 L2.10 0.2 L3.15 1.2 L4.20 0.2 L5.25 1.2 L6.30 0.2 L7.35 1.2 L8.40 0.2 L9.45 1.2 L10.50 0.2 L11.55 1.2 L12.60 0.2 L13.65 1.2 L14.70 0.2 L15.75 1.2 L16.80 0.2 L17.85 1.2 L18.90 0.2 L19.95 1.2 L21.00 0.2 L22.05 1.2 L23.10 0.2 L24.15 1.2 L25.20 0.2 L26.25 1.2 L27.30 0.2 L28.35 1.2 L29.40 0.2 L30.45 1.2" fill="none" stroke="#e09a8c" stroke-width="0.7"/></svg>
<div style="left:0px;top:572px;width:344px;height:12px;background:#ececec;"></div>
<div style="left:1px;top:572px;width:84px;height:12px;background:#f5f5f5;"></div>
<span class="t" style="left:18px;top:575.50px;line-height:12px;font-size:9.3px;color:#222;transform:scaleX(0.9015);">Quickstart Panel</span>
<div style="left:347px;top:578px;width:677px;height:6px;background:#ebebeb;"></div>
<div style="left:347px;top:578px;width:677px;height:0.6px;background:#dcdcdc;"></div>
<div style="left:611.7px;top:578.6px;width:71.5px;height:5.4px;background:#f6f6f6;"></div>
<div style="left:349.5px;top:582.3px;width:7px;height:1.7px;background:#7a8aa0;"></div>
<div style="left:466px;top:582.8px;width:4px;height:1.2px;background:#8a9ab8;"></div>
<div style="left:953px;top:582.8px;width:8px;height:1.2px;background:#c0c0c0;"></div>
<div style="left:975px;top:583px;width:4px;height:1px;background:#b4b4b4;"></div>
<svg style="left:4.5px;top:575.5px" width="10" height="10" viewBox="0 0 16 16"><path d="M4.2 3.5 Q1.2 6 1.5 10 Q2.5 14.5 8 14.8 Q13.5 14.5 14.5 10 Q14.8 6 11.8 3.5" fill="none" stroke="#3f8fd8" stroke-width="2"/><path d="M8 1 V8" stroke="#2f6fc0" stroke-width="2.2"/></svg>
<svg style="left:311.5px;top:578.3px" width="7.5" height="3" viewBox="0 0 7.5 3"><rect x="0.4" y="0.4" width="6.7" height="2.2" fill="#fff" stroke="#747474" stroke-width="0.85"/></svg>
<svg style="left:328.4px;top:578.8px" width="7.5" height="6.8" viewBox="0 0 7.5 6.8"><rect x="0.4" y="0.4" width="6.7" height="6" fill="#fff" stroke="#747474" stroke-width="0.85"/><rect x="0.4" y="0.4" width="6.7" height="1.5" fill="#747474"/></svg>
<div style="left:0px;top:572px;width:344px;height:0.7px;background:#e0e0e0;"></div>
</div>
</body></html>
